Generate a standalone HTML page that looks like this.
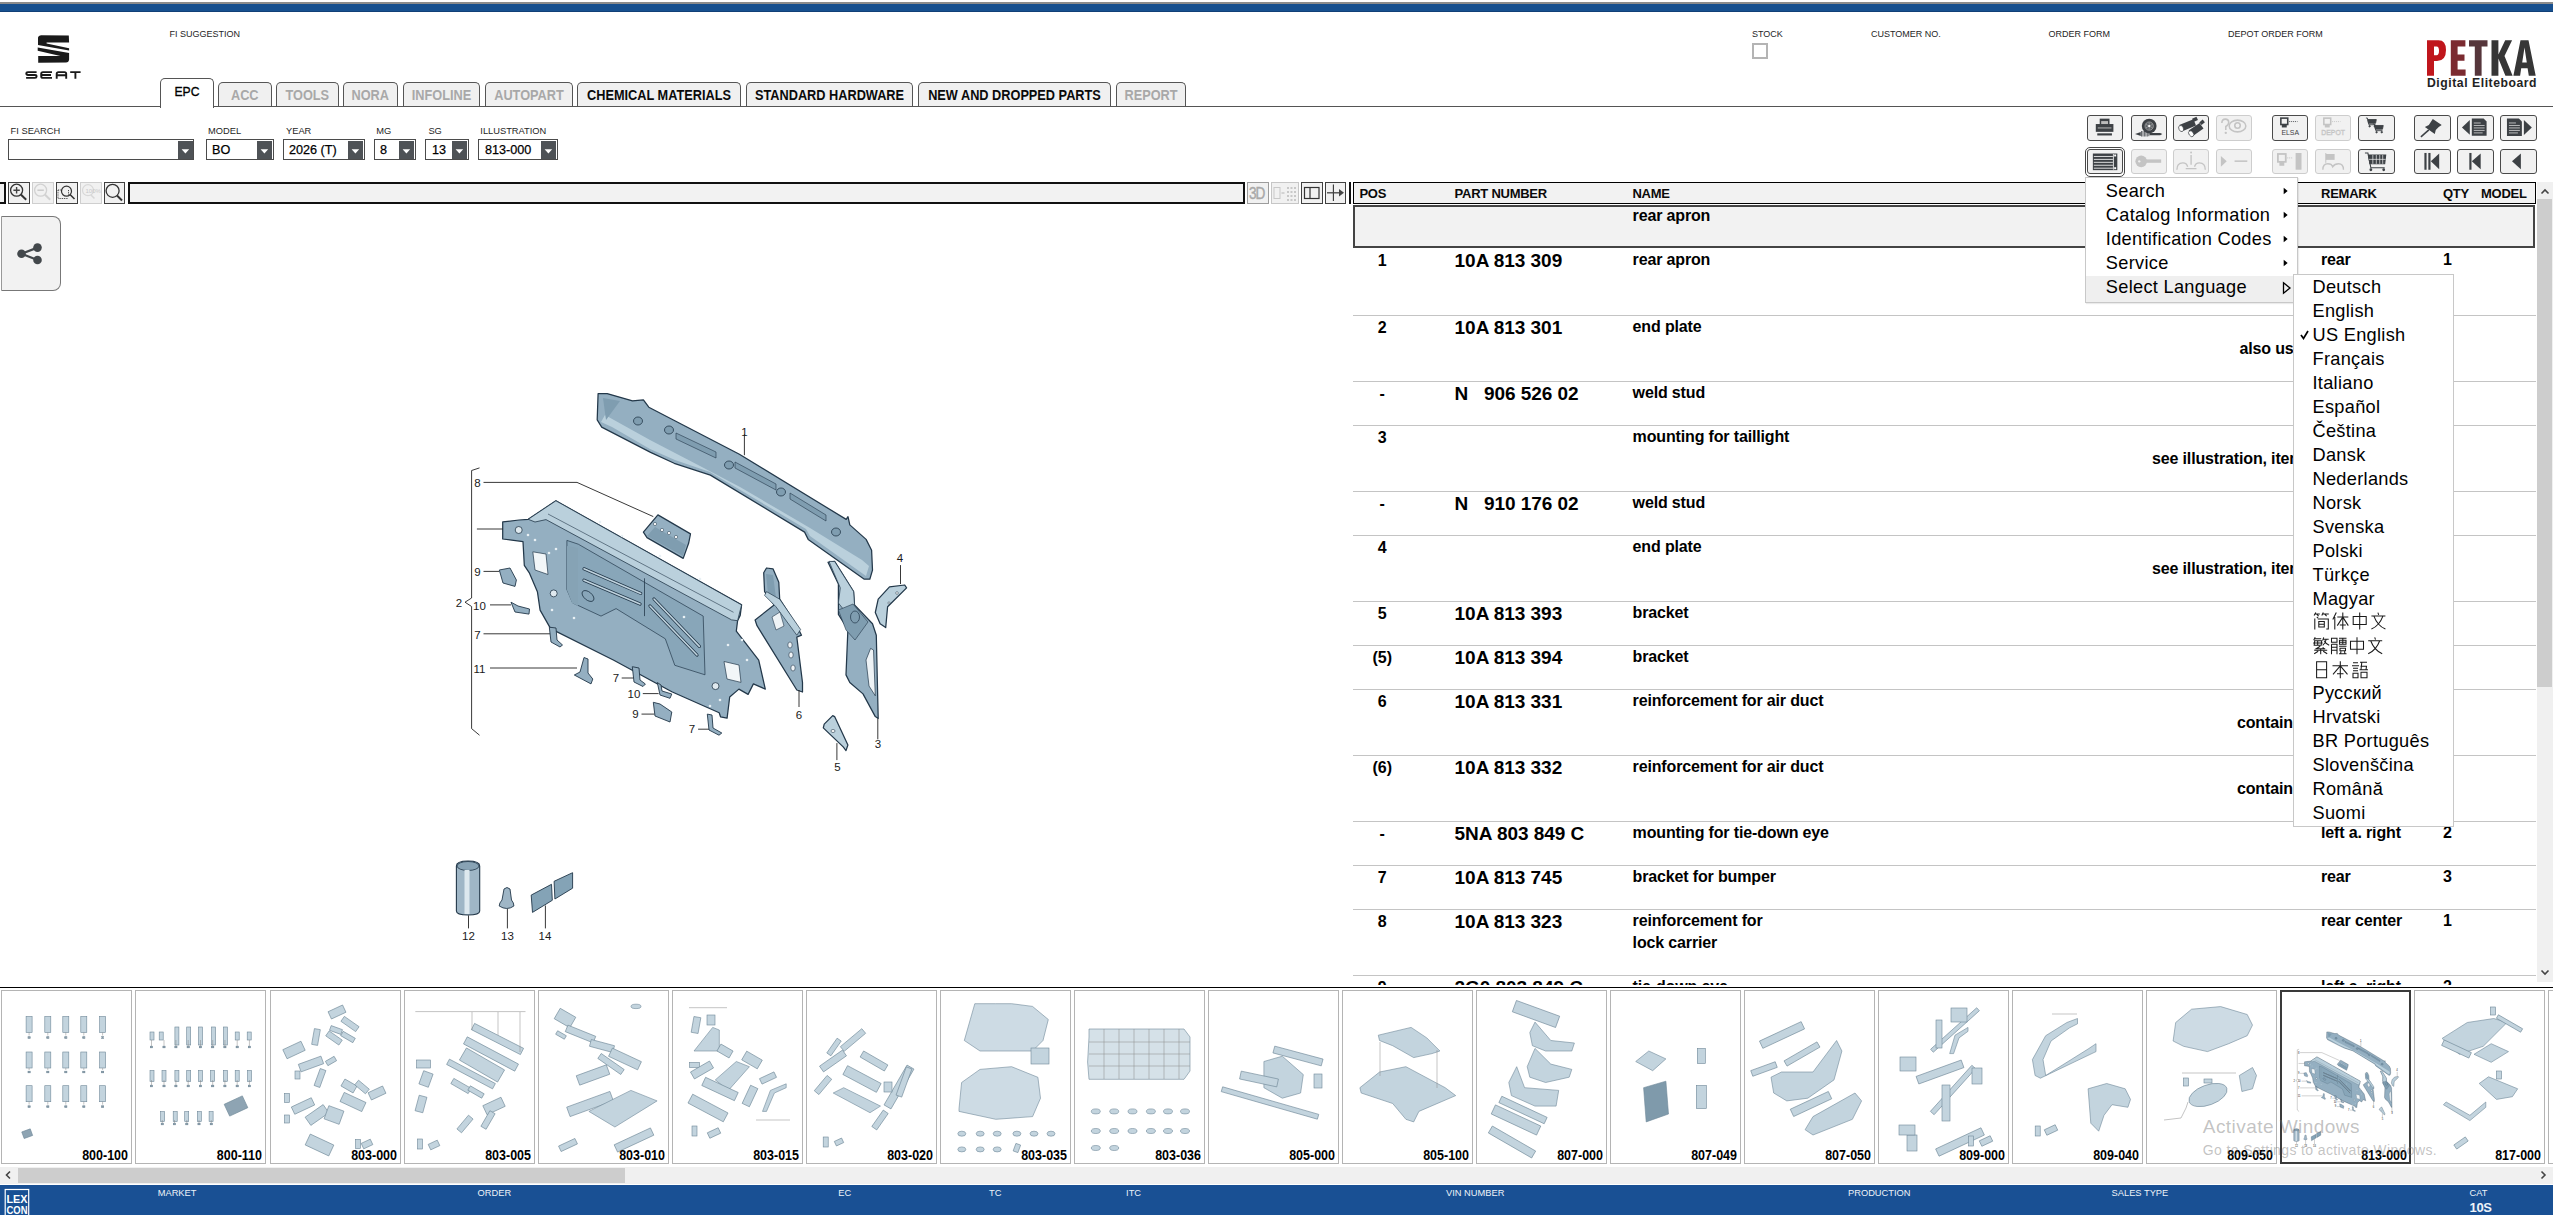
<!DOCTYPE html><html><head><meta charset="utf-8"><style>
*{margin:0;padding:0;box-sizing:border-box}
html,body{width:2553px;height:1215px;overflow:hidden;background:#fff;font-family:"Liberation Sans", sans-serif;}
.t{position:absolute;white-space:nowrap;line-height:normal;}
svg{position:absolute;overflow:visible}
</style></head><body><div style="position:absolute;left:0px;top:2px;width:2553px;height:2px;background:#8c8c8c"></div>
<div style="position:absolute;left:0px;top:4px;width:2553px;height:8px;background:#17508f"></div>
<div style="position:absolute;left:0px;top:11px;width:2553px;height:1px;background:#113f77"></div>
<svg style="left:0;top:0" width="100" height="90" viewBox="0 0 100 90">
<path d="M38,37.6 Q38.3,35.3 41,35.2 L68.8,35.5 L69.1,42.4 L46.6,42.4 L46.6,43.6 L69.1,48.3 L69.1,50.6 L38,45.1 Z" fill="#1a1a1a"/>
<path d="M37.7,47.4 L69.1,53 L69.1,59.4 Q68.8,62.4 66,62.5 L38.2,62.8 L38.2,55.9 L60.4,55.9 L37.7,50.8 Z" fill="#1a1a1a"/>
<g fill="none" stroke="#1a1a1a" stroke-width="1.9">
<path d="M36.6,72.1 L28,72.1 Q26.3,72.1 26.3,73.6 Q26.3,75 28,75 L35,75 Q36.6,75 36.6,76.5 Q36.6,77.9 35,77.9 L26.1,77.9"/>
<path d="M52,72.1 L43,72.1 Q41.2,72.1 41.2,73.8 L41.2,76.2 Q41.2,77.9 43,77.9 L52,77.9 M41.2,75 L51,75"/>
<path d="M56.7,78.8 L56.7,73.8 Q56.7,72.1 58.5,72.1 L64.5,72.1 Q66.2,72.1 66.2,73.8 L66.2,78.8 M56.7,75.2 L66.2,75.2"/>
<path d="M70.2,72.1 L80.6,72.1 M75.4,72.1 L75.4,78.8"/>
</g></svg>
<div class="t" style="left:169.5px;top:28.61px;font-size:9px;font-weight:400;color:#1e1e1e;letter-spacing:0px;">FI SUGGESTION</div>
<div class="t" style="left:1752px;top:28.61px;font-size:9px;font-weight:400;color:#1e1e1e;letter-spacing:0px;">STOCK</div>
<div class="t" style="left:1871px;top:28.61px;font-size:9px;font-weight:400;color:#1e1e1e;letter-spacing:0px;">CUSTOMER NO.</div>
<div class="t" style="left:2048.5px;top:28.61px;font-size:9px;font-weight:400;color:#1e1e1e;letter-spacing:0px;">ORDER FORM</div>
<div class="t" style="left:2228px;top:28.61px;font-size:9px;font-weight:400;color:#1e1e1e;letter-spacing:0px;">DEPOT ORDER FORM</div>
<div style="position:absolute;left:1752px;top:43px;width:16px;height:16px;border:2px solid #b4b4b4;background:#fff"></div>
<svg style="left:0;top:0" width="2553" height="100" viewBox="0 0 2553 100">
<path d="M2427,75.7 L2427,40.2 L2438.5,40.2 Q2446,40.2 2446,50 Q2446,61 2437,61 L2434,61 L2434,75.7 Z M2434,46.5 L2434,55.2 L2436.5,55.2 Q2439,55.2 2439,50.8 Q2439,46.5 2436.5,46.5 Z" fill="#c0161c" fill-rule="evenodd"/>
<path d="M2450.8,40.2 L2465.4,40.2 L2465.4,46.6 L2457.6,46.6 L2457.6,54.5 L2464.5,54.5 L2464.5,60.7 L2457.6,60.7 L2457.6,69.5 L2465.6,69.5 L2465.6,75.7 L2450.8,75.7 Z" fill="#7b2a30"/>
<path d="M2469,40.2 L2487.5,40.2 L2487.5,46.6 L2481.6,46.6 L2481.6,75.7 L2474.8,75.7 L2474.8,46.6 L2469,46.6 Z" fill="#56363b"/>
<path d="M2491.5,40.2 L2498.4,40.2 L2498.4,54.5 L2505.2,40.2 L2512.1,40.2 L2504.5,56 L2512.6,75.7 L2505.4,75.7 L2498.4,58.5 L2498.4,75.7 L2491.5,75.7 Z" fill="#363636"/>
<path d="M2513.4,75.7 L2520.5,40.2 L2528.5,40.2 L2535.7,75.7 L2528.8,75.7 L2527.6,68.2 L2521.2,68.2 L2520.1,75.7 Z M2522.2,62.4 L2526.8,62.4 L2524.5,47.5 Z" fill="#363636" fill-rule="evenodd"/>
</svg>
<div class="t" style="left:2427px;top:76.36px;font-size:12.2px;font-weight:700;color:#232323;letter-spacing:0.55px;">Digital Eliteboard</div>
<div style="position:absolute;left:0px;top:105.5px;width:2553px;height:1.5px;background:#555"></div>
<div style="position:absolute;left:160px;top:78px;width:54px;height:29.5px;background:#fff;border:1.5px solid #555;border-bottom:none;border-radius:5px 5px 0 0"></div>
<div class="t" style="left:160px;width:54px;text-align:center;top:84.0px;font-size:13.5px;font-weight:400;color:#000;-webkit-text-stroke:0.35px #000;transform:scaleX(0.9);transform-origin:50% 50%">EPC</div>
<div style="position:absolute;left:218px;top:82px;width:53.5px;height:24px;background:#f0f0f0;border:1.5px solid #555;border-bottom:none;border-radius:5px 5px 0 0"></div>
<div class="t" style="left:218px;width:53.5px;text-align:center;top:86.9px;font-size:14px;font-weight:700;color:#a8a8a8;transform:scaleX(0.91);transform-origin:50% 50%">ACC</div>
<div style="position:absolute;left:276px;top:82px;width:62.5px;height:24px;background:#f0f0f0;border:1.5px solid #555;border-bottom:none;border-radius:5px 5px 0 0"></div>
<div class="t" style="left:276px;width:62.5px;text-align:center;top:86.9px;font-size:14px;font-weight:700;color:#a8a8a8;transform:scaleX(0.91);transform-origin:50% 50%">TOOLS</div>
<div style="position:absolute;left:343px;top:82px;width:54.5px;height:24px;background:#f0f0f0;border:1.5px solid #555;border-bottom:none;border-radius:5px 5px 0 0"></div>
<div class="t" style="left:343px;width:54.5px;text-align:center;top:86.9px;font-size:14px;font-weight:700;color:#a8a8a8;transform:scaleX(0.91);transform-origin:50% 50%">NORA</div>
<div style="position:absolute;left:402.5px;top:82px;width:77.0px;height:24px;background:#f0f0f0;border:1.5px solid #555;border-bottom:none;border-radius:5px 5px 0 0"></div>
<div class="t" style="left:402.5px;width:77.0px;text-align:center;top:86.9px;font-size:14px;font-weight:700;color:#a8a8a8;transform:scaleX(0.91);transform-origin:50% 50%">INFOLINE</div>
<div style="position:absolute;left:484.5px;top:82px;width:88.0px;height:24px;background:#f0f0f0;border:1.5px solid #555;border-bottom:none;border-radius:5px 5px 0 0"></div>
<div class="t" style="left:484.5px;width:88.0px;text-align:center;top:86.9px;font-size:14px;font-weight:700;color:#a8a8a8;transform:scaleX(0.91);transform-origin:50% 50%">AUTOPART</div>
<div style="position:absolute;left:577px;top:82px;width:164px;height:24px;background:#f0f0f0;border:1.5px solid #555;border-bottom:none;border-radius:5px 5px 0 0"></div>
<div class="t" style="left:577px;width:164px;text-align:center;top:86.9px;font-size:14px;font-weight:700;color:#0a0a0a;transform:scaleX(0.91);transform-origin:50% 50%">CHEMICAL MATERIALS</div>
<div style="position:absolute;left:745.5px;top:82px;width:167.0px;height:24px;background:#f0f0f0;border:1.5px solid #555;border-bottom:none;border-radius:5px 5px 0 0"></div>
<div class="t" style="left:745.5px;width:167.0px;text-align:center;top:86.9px;font-size:14px;font-weight:700;color:#0a0a0a;transform:scaleX(0.91);transform-origin:50% 50%">STANDARD HARDWARE</div>
<div style="position:absolute;left:917.5px;top:82px;width:193.0px;height:24px;background:#f0f0f0;border:1.5px solid #555;border-bottom:none;border-radius:5px 5px 0 0"></div>
<div class="t" style="left:917.5px;width:193.0px;text-align:center;top:86.9px;font-size:14px;font-weight:700;color:#0a0a0a;transform:scaleX(0.91);transform-origin:50% 50%">NEW AND DROPPED PARTS</div>
<div style="position:absolute;left:1115.5px;top:82px;width:70.0px;height:24px;background:#f0f0f0;border:1.5px solid #555;border-bottom:none;border-radius:5px 5px 0 0"></div>
<div class="t" style="left:1115.5px;width:70.0px;text-align:center;top:86.9px;font-size:14px;font-weight:700;color:#a8a8a8;transform:scaleX(0.91);transform-origin:50% 50%">REPORT</div>
<div class="t" style="left:10.6px;top:126.23px;font-size:9.3px;font-weight:400;color:#1e1e1e;letter-spacing:0px;">FI SEARCH</div>
<div class="t" style="left:208px;top:126.23px;font-size:9.3px;font-weight:400;color:#1e1e1e;letter-spacing:0px;">MODEL</div>
<div class="t" style="left:286px;top:126.23px;font-size:9.3px;font-weight:400;color:#1e1e1e;letter-spacing:0px;">YEAR</div>
<div class="t" style="left:376.3px;top:126.23px;font-size:9.3px;font-weight:400;color:#1e1e1e;letter-spacing:0px;">MG</div>
<div class="t" style="left:428.4px;top:126.23px;font-size:9.3px;font-weight:400;color:#1e1e1e;letter-spacing:0px;">SG</div>
<div class="t" style="left:480.3px;top:126.23px;font-size:9.3px;font-weight:400;color:#1e1e1e;letter-spacing:0px;">ILLUSTRATION</div>
<div style="position:absolute;left:8.2px;top:139.2px;width:186.3px;height:21.3px;border:1.5px solid #4b4b4b;background:#fff"></div>
<div style="position:absolute;left:178.0px;top:141.2px;width:14.8px;height:17.6px;background:#4e5256"></div>
<svg style="left:178.0px;top:141.2px" width="15" height="18"><path d="M3.6,8.2 L11.2,8.2 L7.4,12.4 Z" fill="#fff"/></svg>
<div style="position:absolute;left:206.2px;top:139.2px;width:67.40000000000003px;height:21.3px;border:1.5px solid #4b4b4b;background:#fff"></div>
<div style="position:absolute;left:257.1px;top:141.2px;width:14.8px;height:17.6px;background:#4e5256"></div>
<svg style="left:257.1px;top:141.2px" width="15" height="18"><path d="M3.6,8.2 L11.2,8.2 L7.4,12.4 Z" fill="#fff"/></svg>
<div class="t" style="left:212.39999999999998px;top:141.55px;font-size:13.3px;font-weight:400;color:#000;letter-spacing:0px;-webkit-text-stroke:0.25px #000;transform:scaleX(0.95);transform-origin:0 50%">BO</div>
<div style="position:absolute;left:283.2px;top:139.2px;width:81.40000000000003px;height:21.3px;border:1.5px solid #4b4b4b;background:#fff"></div>
<div style="position:absolute;left:348.1px;top:141.2px;width:14.8px;height:17.6px;background:#4e5256"></div>
<svg style="left:348.1px;top:141.2px" width="15" height="18"><path d="M3.6,8.2 L11.2,8.2 L7.4,12.4 Z" fill="#fff"/></svg>
<div class="t" style="left:289.4px;top:141.55px;font-size:13.3px;font-weight:400;color:#000;letter-spacing:0px;-webkit-text-stroke:0.25px #000;transform:scaleX(0.95);transform-origin:0 50%">2026 (T)</div>
<div style="position:absolute;left:374.2px;top:139.2px;width:41.5px;height:21.3px;border:1.5px solid #4b4b4b;background:#fff"></div>
<div style="position:absolute;left:399.2px;top:141.2px;width:14.8px;height:17.6px;background:#4e5256"></div>
<svg style="left:399.2px;top:141.2px" width="15" height="18"><path d="M3.6,8.2 L11.2,8.2 L7.4,12.4 Z" fill="#fff"/></svg>
<div class="t" style="left:380.4px;top:141.55px;font-size:13.3px;font-weight:400;color:#000;letter-spacing:0px;-webkit-text-stroke:0.25px #000;transform:scaleX(0.95);transform-origin:0 50%">8</div>
<div style="position:absolute;left:425.3px;top:139.2px;width:43.30000000000001px;height:21.3px;border:1.5px solid #4b4b4b;background:#fff"></div>
<div style="position:absolute;left:452.1px;top:141.2px;width:14.8px;height:17.6px;background:#4e5256"></div>
<svg style="left:452.1px;top:141.2px" width="15" height="18"><path d="M3.6,8.2 L11.2,8.2 L7.4,12.4 Z" fill="#fff"/></svg>
<div class="t" style="left:431.5px;top:141.55px;font-size:13.3px;font-weight:400;color:#000;letter-spacing:0px;-webkit-text-stroke:0.25px #000;transform:scaleX(0.95);transform-origin:0 50%">13</div>
<div style="position:absolute;left:478.3px;top:139.2px;width:79.40000000000003px;height:21.3px;border:1.5px solid #4b4b4b;background:#fff"></div>
<div style="position:absolute;left:541.2px;top:141.2px;width:14.8px;height:17.6px;background:#4e5256"></div>
<svg style="left:541.2px;top:141.2px" width="15" height="18"><path d="M3.6,8.2 L11.2,8.2 L7.4,12.4 Z" fill="#fff"/></svg>
<div class="t" style="left:484.5px;top:141.55px;font-size:13.3px;font-weight:400;color:#000;letter-spacing:0px;-webkit-text-stroke:0.25px #000;transform:scaleX(0.95);transform-origin:0 50%">813-000</div>
<div style="position:absolute;left:2087.3px;top:115.3px;width:36.19999999999982px;height:25.299999999999997px;border:1.6px solid #4a4a4a;border-radius:3px;background:#f1f1f1"></div>
<svg style="left:2087.3px;top:115.3px" width="36.19999999999982" height="25.299999999999997" viewBox="0 0 37 25.4"><g fill="#3d4145"><rect x="13" y="3.5" width="10" height="8" /><rect x="9" y="9" width="18" height="8"/><rect x="10.5" y="18.5" width="15" height="2.2"/></g><rect x="14.5" y="6" width="7" height="3" fill="#bbb"/><rect x="11" y="12.5" width="14" height="1" fill="#bbb"/></svg>
<div style="position:absolute;left:2085.2px;top:147.2px;width:40.2px;height:29.4px;border:1.5px solid #474747;border-radius:5px"></div>
<div style="position:absolute;left:2087.3px;top:149.4px;width:36.19999999999982px;height:25.099999999999994px;border:1.6px solid #4a4a4a;border-radius:3px;background:#f1f1f1"></div>
<svg style="left:2087.3px;top:149.4px" width="36.19999999999982" height="25.099999999999994" viewBox="0 0 37 25.4"><rect x="6" y="4.5" width="25" height="17" fill="#3d4145"/><g stroke="#f1f1f1" stroke-width="0.9"><path d="M7,7.5 L26.5,7.5 M7,10.5 L26.5,10.5 M7,13.5 L26.5,13.5 M7,16.5 L26.5,16.5 M7,19.5 L26.5,19.5 M27,5 L27,21"/></g><rect x="27.8" y="5.5" width="2" height="2" fill="#fff"/><rect x="27.8" y="18.5" width="2" height="2" fill="#fff"/></svg>
<div style="position:absolute;left:2130.5px;top:115.3px;width:36.0px;height:25.299999999999997px;border:1.6px solid #4a4a4a;border-radius:3px;background:#f1f1f1"></div>
<svg style="left:2130.5px;top:115.3px" width="36.0" height="25.299999999999997" viewBox="0 0 37 25.4"><circle cx="18.7" cy="11.1" r="7.6" fill="#3d4145"/><circle cx="18.7" cy="11.1" r="4.3" fill="#5c6064" stroke="#bdbdbd" stroke-width="0.6"/><g stroke="#c8c8c8" stroke-width="0.5"><path d="M18.7,7.5 L18.7,14.7 M15.3,9.3 L22.1,12.9 M15.3,12.9 L22.1,9.3"/></g><circle cx="18.7" cy="11.1" r="1.1" fill="#fff"/><path d="M4.2,19.3 L10,17.2 L10,21.4 Z" fill="#3d4145"/><g stroke="#3d4145" stroke-width="0.8"><path d="M10.8,16.2 L10.8,21.8 M12.3,16.2 L12.3,21.8 M13.8,16.2 L13.8,21.8 M15.3,16.2 L15.3,21.8 M16.8,16.2 L16.8,21.8 M18.3,16.5 L18.3,21.5"/></g><path d="M19,18.1 L30,18.1 L32.2,19.3 L30,20.5 L19,20.5 Z" fill="#3d4145"/></svg>
<div style="position:absolute;left:2130.5px;top:149.4px;width:36.0px;height:25.099999999999994px;border:1.6px solid #cdcdcd;border-radius:3px;background:#f1f1f1"></div>
<svg style="left:2130.5px;top:149.4px" width="36.0" height="25.099999999999994" viewBox="0 0 37 25.4"><circle cx="10.5" cy="12.5" r="6" fill="#c4c4c4"/><rect x="14" y="10.5" width="17" height="3.5" fill="#c4c4c4"/><circle cx="8.5" cy="12.5" r="1.2" fill="#eee"/></svg>
<div style="position:absolute;left:2173.3px;top:115.3px;width:36.19999999999982px;height:25.299999999999997px;border:1.6px solid #4a4a4a;border-radius:3px;background:#f1f1f1"></div>
<svg style="left:2173.3px;top:115.3px" width="36.19999999999982" height="25.299999999999997" viewBox="0 0 37 25.4"><g fill="#3d4145"><rect x="7.1" y="6.8" width="15.7" height="7" transform="rotate(-22.5 15 10.3)"/><rect x="16.8" y="11.2" width="13.6" height="7" transform="rotate(-35 23.6 14.7)"/><rect x="20" y="2.5" width="5" height="3.6" transform="rotate(-25 22.5 4.3)"/><rect x="27.5" y="5.5" width="4.5" height="3.6" transform="rotate(-40 29.7 7.3)"/></g><ellipse cx="8.3" cy="13.6" rx="2.3" ry="3.3" transform="rotate(-25 8.3 13.6)" fill="#fff" stroke="#3d4145" stroke-width="0.7"/><ellipse cx="18.6" cy="18.9" rx="2.3" ry="3.3" transform="rotate(-35 18.6 18.9)" fill="#fff" stroke="#3d4145" stroke-width="0.7"/></svg>
<div style="position:absolute;left:2173.3px;top:149.4px;width:36.19999999999982px;height:25.099999999999994px;border:1.6px solid #cdcdcd;border-radius:3px;background:#f1f1f1"></div>
<svg style="left:2173.3px;top:149.4px" width="36.19999999999982" height="25.099999999999994" viewBox="0 0 37 25.4"><g fill="none" stroke="#c4c4c4" stroke-width="1.4"><path d="M4,21 Q4,14 10,14 Q14,14 15,18 M22,18 Q23,14 27,14 Q33,14 33,21 M13,20 L24,20 M18.5,6 L18.5,16"/></g><circle cx="18.5" cy="3.5" r="1" fill="#c4c4c4"/></svg>
<div style="position:absolute;left:2216.3px;top:115.3px;width:36.19999999999982px;height:25.299999999999997px;border:1.6px solid #cdcdcd;border-radius:3px;background:#f1f1f1"></div>
<svg style="left:2216.3px;top:115.3px" width="36.19999999999982" height="25.299999999999997" viewBox="0 0 37 25.4"><g fill="none" stroke="#c4c4c4" stroke-width="1.6"><path d="M6,8 Q6,4 9.5,4 Q13,4 13,7.5 Q13,10 10,11.5 L10,15"/><ellipse cx="22" cy="11" rx="8.5" ry="6"/><circle cx="22" cy="10.5" r="2.8"/></g><circle cx="10" cy="18" r="1.2" fill="#c4c4c4"/></svg>
<div style="position:absolute;left:2216.3px;top:149.4px;width:36.19999999999982px;height:25.099999999999994px;border:1.6px solid #cdcdcd;border-radius:3px;background:#f1f1f1"></div>
<svg style="left:2216.3px;top:149.4px" width="36.19999999999982" height="25.099999999999994" viewBox="0 0 37 25.4"><path d="M5,7 L11,12.5 L5,18 Z" fill="#c4c4c4"/><rect x="19" y="11.5" width="13" height="1.6" fill="#c4c4c4"/></svg>
<div style="position:absolute;left:2272.1px;top:115.3px;width:36.40000000000009px;height:25.299999999999997px;border:1.6px solid #4a4a4a;border-radius:3px;background:#f1f1f1"></div>
<svg style="left:2272.1px;top:115.3px" width="36.40000000000009" height="25.299999999999997" viewBox="0 0 37 25.4"><rect x="9" y="3" width="7" height="6.5" fill="none" stroke="#3d4145" stroke-width="1.6"/><rect x="10" y="10" width="5" height="2.5" fill="#3d4145"/><path d="M17.5,6.5 L26,6.5" stroke="#3d4145" stroke-width="0.9" stroke-dasharray="1,1"/><text x="18.5" y="20.5" font-size="7" text-anchor="middle" fill="#3d4145" font-family="Liberation Sans">ELSA</text></svg>
<div style="position:absolute;left:2272.1px;top:149.4px;width:36.40000000000009px;height:25.099999999999994px;border:1.6px solid #cdcdcd;border-radius:3px;background:#f1f1f1"></div>
<svg style="left:2272.1px;top:149.4px" width="36.40000000000009" height="25.099999999999994" viewBox="0 0 37 25.4"><rect x="6" y="5" width="8" height="8" fill="none" stroke="#c4c4c4" stroke-width="1.8"/><rect x="7.5" y="13" width="5" height="4" fill="#c4c4c4"/><path d="M15.5,9 L21,9" stroke="#c4c4c4" stroke-width="1" stroke-dasharray="1,1"/><rect x="24" y="4" width="6" height="17" fill="#c4c4c4"/></svg>
<div style="position:absolute;left:2315.2px;top:115.3px;width:36.30000000000018px;height:25.299999999999997px;border:1.6px solid #cdcdcd;border-radius:3px;background:#f1f1f1"></div>
<svg style="left:2315.2px;top:115.3px" width="36.30000000000018" height="25.299999999999997" viewBox="0 0 37 25.4"><rect x="9" y="3" width="7" height="6.5" fill="none" stroke="#c4c4c4" stroke-width="1.6"/><rect x="10" y="10" width="5" height="2.5" fill="#c4c4c4"/><path d="M17.5,6.5 L26,6.5" stroke="#c4c4c4" stroke-width="0.9" stroke-dasharray="1,1"/><text x="18.5" y="20.5" font-size="7" text-anchor="middle" fill="none" stroke="#c4c4c4" stroke-width="0.5" font-family="Liberation Sans">DEPOT</text></svg>
<div style="position:absolute;left:2315.2px;top:149.4px;width:36.30000000000018px;height:25.099999999999994px;border:1.6px solid #cdcdcd;border-radius:3px;background:#f1f1f1"></div>
<svg style="left:2315.2px;top:149.4px" width="36.30000000000018" height="25.099999999999994" viewBox="0 0 37 25.4"><rect x="11" y="5" width="9" height="6" fill="#c4c4c4"/><path d="M11,4 L11,14" stroke="#c4c4c4" stroke-width="1"/><g fill="none" stroke="#c4c4c4" stroke-width="1.4"><path d="M8,21 Q8,15 13,15 Q17,15 18,18 Q20,15 24,15 Q29,15 29,21"/></g></svg>
<div style="position:absolute;left:2358.2px;top:115.3px;width:36.600000000000364px;height:25.299999999999997px;border:1.6px solid #4a4a4a;border-radius:3px;background:#f1f1f1"></div>
<svg style="left:2358.2px;top:115.3px" width="36.600000000000364" height="25.299999999999997" viewBox="0 0 37 25.4"><g transform="translate(8 3) scale(0.75)" fill="none" stroke="#3d4145" stroke-width="1.2"><path d="M0,0 L2,0 L4,9 L13,9"/><path d="M2.5,2 L14,2 L13,7 L3.5,7 Z" fill="#3d4145"/><circle cx="5" cy="11" r="1" fill="#3d4145"/><circle cx="12" cy="11" r="1" fill="#3d4145"/></g><g transform="translate(15 9) scale(0.75)" fill="none" stroke="#3d4145" stroke-width="1.2"><path d="M0,0 L2,0 L4,9 L13,9"/><path d="M2.5,2 L14,2 L13,7 L3.5,7 Z" fill="#3d4145"/><circle cx="5" cy="11" r="1" fill="#3d4145"/><circle cx="12" cy="11" r="1" fill="#3d4145"/></g></svg>
<div style="position:absolute;left:2358.2px;top:149.4px;width:36.600000000000364px;height:25.099999999999994px;border:1.6px solid #4a4a4a;border-radius:3px;background:#f1f1f1"></div>
<svg style="left:2358.2px;top:149.4px" width="36.600000000000364" height="25.099999999999994" viewBox="0 0 37 25.4"><g fill="none" stroke="#3d4145" stroke-width="1.1"><path d="M7,4 L10,4 L13,19 L27,19"/><path d="M10.5,6 L28,6 L27,15 L12,15 Z" fill="#3d4145"/></g><g stroke="#f1f1f1" stroke-width="0.7"><path d="M15,6 L15,15 M18.5,6 L18.5,15 M22,6 L22,15 M25,6 L25,15 M11,10.5 L28,10.5"/></g><circle cx="13" cy="21" r="1.4" fill="#3d4145"/><circle cx="26" cy="21" r="1.4" fill="#3d4145"/></svg>
<div style="position:absolute;left:2414.2px;top:115.3px;width:36.600000000000364px;height:25.299999999999997px;border:1.6px solid #4a4a4a;border-radius:3px;background:#f1f1f1"></div>
<svg style="left:2414.2px;top:115.3px" width="36.600000000000364" height="25.299999999999997" viewBox="0 0 37 25.4"><path d="M19,4 L28,10 L25,12 L22,15 L21,19 L11,12 L15,10 L17,7 Z" fill="#3d4145"/><path d="M15,15 L7,22" stroke="#3d4145" stroke-width="1.6"/></svg>
<div style="position:absolute;left:2414.2px;top:149.4px;width:36.600000000000364px;height:25.099999999999994px;border:1.6px solid #4a4a4a;border-radius:3px;background:#f1f1f1"></div>
<svg style="left:2414.2px;top:149.4px" width="36.600000000000364" height="25.099999999999994" viewBox="0 0 37 25.4"><rect x="10.5" y="4" width="2.2" height="17" fill="#3d4145"/><rect x="14.5" y="4" width="2.2" height="17" fill="#3d4145"/><path d="M17,12.5 L25.5,4.5 L25.5,20.5 Z" fill="#3d4145"/></svg>
<div style="position:absolute;left:2457.1px;top:115.3px;width:36.5px;height:25.299999999999997px;border:1.6px solid #4a4a4a;border-radius:3px;background:#f1f1f1"></div>
<svg style="left:2457.1px;top:115.3px" width="36.5" height="25.299999999999997" viewBox="0 0 37 25.4"><path d="M5,12.5 L13,5 L13,20 Z" fill="#3d4145"/><path d="M15,3.5 L27,3.5 L30,6.5 L30,21 L15,21 Z" fill="#3d4145"/><g stroke="#f1f1f1" stroke-width="0.7"><path d="M17,8 L24,8 M17,10.5 L28,10.5 M17,13 L28,13 M17,15.5 L28,15.5 M17,18 L26,18"/></g></svg>
<div style="position:absolute;left:2457.1px;top:149.4px;width:36.5px;height:25.099999999999994px;border:1.6px solid #4a4a4a;border-radius:3px;background:#f1f1f1"></div>
<svg style="left:2457.1px;top:149.4px" width="36.5" height="25.099999999999994" viewBox="0 0 37 25.4"><rect x="12.5" y="4" width="2.2" height="17" fill="#3d4145"/><path d="M15,12.5 L24,4.5 L24,20.5 Z" fill="#3d4145"/></svg>
<div style="position:absolute;left:2500.2px;top:115.3px;width:36.80000000000018px;height:25.299999999999997px;border:1.6px solid #4a4a4a;border-radius:3px;background:#f1f1f1"></div>
<svg style="left:2500.2px;top:115.3px" width="36.80000000000018" height="25.299999999999997" viewBox="0 0 37 25.4"><path d="M32,12.5 L24,5 L24,20 Z" fill="#3d4145"/><path d="M7,3.5 L19,3.5 L22,6.5 L22,21 L7,21 Z" fill="#3d4145"/><g stroke="#f1f1f1" stroke-width="0.7"><path d="M9,8 L16,8 M9,10.5 L20,10.5 M9,13 L20,13 M9,15.5 L20,15.5 M9,18 L18,18"/></g></svg>
<div style="position:absolute;left:2500.2px;top:149.4px;width:36.80000000000018px;height:25.099999999999994px;border:1.6px solid #4a4a4a;border-radius:3px;background:#f1f1f1"></div>
<svg style="left:2500.2px;top:149.4px" width="36.80000000000018" height="25.099999999999994" viewBox="0 0 37 25.4"><path d="M12,12.5 L21,4.5 L21,20.5 Z" fill="#3d4145"/></svg>
<div style="position:absolute;left:-4px;top:182.1px;width:10px;height:21.6px;border:2.5px solid #111;background:#f2f2f2"></div>
<div style="position:absolute;left:8.2px;top:182.1px;width:21.7px;height:21.6px;border:1.5px solid #404040;background:#f1f1f1"></div>
<svg style="left:8.2px;top:182.1px" width="22" height="22" viewBox="0 0 22 22"><circle cx="8.6" cy="8.2" r="6" fill="none" stroke="#333" stroke-width="1.3"/><path d="M5.4,8.2 L11.8,8.2 M8.6,5 L8.6,11.4" stroke="#444" stroke-width="1.4"/><path d="M12.8,12.5 L18.2,17.8" stroke="#333" stroke-width="2"/></svg>
<div style="position:absolute;left:32px;top:182.1px;width:21.700000000000003px;height:21.6px;border:1.5px solid #cfcfcf;background:#f1f1f1"></div>
<svg style="left:32px;top:182.1px" width="22" height="22" viewBox="0 0 22 22"><circle cx="8.6" cy="8.2" r="6" fill="none" stroke="#d2d2d2" stroke-width="1.3"/><path d="M5.4,8.2 L11.8,8.2" stroke="#c8c8c8" stroke-width="1.4"/><path d="M12.8,12.5 L18.2,17.8" stroke="#d2d2d2" stroke-width="2"/></svg>
<div style="position:absolute;left:56.2px;top:182.1px;width:21.39999999999999px;height:21.6px;border:1.5px solid #404040;background:#f1f1f1"></div>
<svg style="left:56.2px;top:182.1px" width="22" height="22" viewBox="0 0 22 22"><circle cx="10.5" cy="9.2" r="5" fill="none" stroke="#333" stroke-width="1.2"/><path d="M12.5,8 L12.5,13.5 M2,8 L2,16.5 L12,16.5 M2,8 L6,8" stroke="#333" stroke-width="0.9" stroke-dasharray="1,0.8" fill="none"/><path d="M14,12.5 L18.5,17" stroke="#333" stroke-width="1.6"/></svg>
<div style="position:absolute;left:80.2px;top:182.1px;width:21.5px;height:21.6px;border:1.5px solid #cfcfcf;background:#f1f1f1"></div>
<svg style="left:80.2px;top:182.1px" width="22" height="22" viewBox="0 0 22 22"><circle cx="8" cy="8.2" r="5.5" fill="none" stroke="#d8d8d8" stroke-width="1.2"/><text x="5.5" y="10.5" font-size="6" fill="#c8c8c8" font-family="Liberation Sans">100%</text><path d="M11,13 L14.5,16.5" stroke="#d8d8d8" stroke-width="1.5"/></svg>
<div style="position:absolute;left:104.2px;top:182.1px;width:21.299999999999997px;height:21.6px;border:1.5px solid #404040;background:#f1f1f1"></div>
<svg style="left:104.2px;top:182.1px" width="22" height="22" viewBox="0 0 22 22"><circle cx="8.6" cy="8.8" r="6.5" fill="none" stroke="#333" stroke-width="1.3"/><path d="M13,13.5 L18,18.5" stroke="#333" stroke-width="2"/></svg>
<div style="position:absolute;left:128.3px;top:182.1px;width:1116.5px;height:21.6px;border:2.5px solid #111;background:#f2f2f2"></div>
<div style="position:absolute;left:1247.3px;top:182.1px;width:21.40000000000009px;height:21.6px;border:1.5px solid #9c9c9c;background:#f1f1f1"></div>
<svg style="left:1247.3px;top:182.1px" width="21.40000000000009" height="22" viewBox="0 0 21.40000000000009 22"><text x="2.5" y="17" font-size="16" fill="#a8a8a8" stroke="#a8a8a8" stroke-width="0.4" font-family="Liberation Sans" transform="scale(0.85 1)" textLength="19">3D</text></svg>
<div style="position:absolute;left:1271.2px;top:182.1px;width:27.399999999999864px;height:21.6px;border:1.5px solid #c6c6c6;background:#f1f1f1"></div>
<svg style="left:1271.2px;top:182.1px" width="27.399999999999864" height="22" viewBox="0 0 27.399999999999864 22"><rect x="3" y="5.5" width="6" height="11" fill="none" stroke="#c8c8c8" stroke-width="1"/><path d="M10.5,11 L13.5,11" stroke="#c8c8c8" stroke-width="1.5"/><g fill="#c8c8c8"><rect x="16" y="5" width="2" height="2"/><rect x="19.5" y="5" width="2" height="2"/><rect x="23" y="5" width="2" height="2"/><rect x="16" y="9" width="2" height="2"/><rect x="19.5" y="9" width="2" height="2"/><rect x="23" y="9" width="2" height="2"/><rect x="16" y="13" width="2" height="2"/><rect x="19.5" y="13" width="2" height="2"/><rect x="23" y="13" width="2" height="2"/><rect x="16" y="17" width="2" height="2"/><rect x="19.5" y="17" width="2" height="2"/><rect x="23" y="17" width="2" height="2"/></g></svg>
<div style="position:absolute;left:1301.2px;top:182.1px;width:21.5px;height:21.6px;border:1.5px solid #404040;background:#f1f1f1"></div>
<svg style="left:1301.2px;top:182.1px" width="21.5" height="22" viewBox="0 0 21.5 22"><rect x="3.5" y="5.5" width="14.5" height="11" fill="none" stroke="#333" stroke-width="1.2"/><path d="M9,5.5 L9,16.5" stroke="#333" stroke-width="1.2"/></svg>
<div style="position:absolute;left:1325.1px;top:182.1px;width:21.40000000000009px;height:21.6px;border:1.5px solid #404040;background:#f1f1f1"></div>
<svg style="left:1325.1px;top:182.1px" width="21.40000000000009" height="22" viewBox="0 0 21.40000000000009 22"><path d="M8.4,2.5 L8.4,19" stroke="#333" stroke-width="1.1"/><path d="M2,10.8 L16,10.8" stroke="#444" stroke-width="1.3"/><path d="M14,7 L19,10.8 L14,14.5 Z" fill="#444"/></svg>
<div style="position:absolute;left:1348.7px;top:182.1px;width:2px;height:21.8px;background:#111"></div>
<div style="position:absolute;left:1.2px;top:216.2px;width:59.6px;height:75.2px;border:1.2px solid #777;border-left:1.2px solid #999;border-radius:0 8px 8px 0;background:#f2f2f2"></div>
<svg style="left:0;top:0" width="80" height="300"><g fill="#43484c"><circle cx="21.5" cy="253.8" r="4.3"/><circle cx="37.5" cy="247.6" r="4.3"/><circle cx="37.5" cy="260" r="4.3"/></g><path d="M21.5,253.8 L37.5,247.6 M21.5,253.8 L37.5,260" stroke="#43484c" stroke-width="2.2"/></svg>
<div style="position:absolute;left:1353.2px;top:182.1px;width:1182.6000000000001px;height:21.6px;border:1.5px solid #000;border-bottom:1px solid #000;background:#f2f2f2"></div>
<div class="t" style="left:1359.4px;top:185.93px;font-size:13px;font-weight:700;color:#0a0a0a;letter-spacing:-0.25px;">POS</div>
<div class="t" style="left:1454.6px;top:185.93px;font-size:13px;font-weight:700;color:#0a0a0a;letter-spacing:-0.25px;">PART NUMBER</div>
<div class="t" style="left:1632.4px;top:185.93px;font-size:13px;font-weight:700;color:#0a0a0a;letter-spacing:-0.25px;">NAME</div>
<div class="t" style="left:2321px;top:185.93px;font-size:13px;font-weight:700;color:#0a0a0a;letter-spacing:-0.25px;">REMARK</div>
<div class="t" style="left:2443px;top:185.93px;font-size:13px;font-weight:700;color:#0a0a0a;letter-spacing:-0.25px;">QTY</div>
<div class="t" style="left:2481px;top:185.93px;font-size:13px;font-weight:700;color:#0a0a0a;letter-spacing:-0.25px;">MODEL</div>
<div style="position:absolute;left:1353px;top:204px;width:1183px;height:780.5px;overflow:hidden">
<div style="position:absolute;left:0.2px;top:1.1px;width:1182px;height:43.4px;border:2px solid #444;background:#f2f2f2"></div>
<div class="t" style="left:279.5999999999999px;top:2.66px;font-size:16px;font-weight:700;color:#000;letter-spacing:-0.15px">rear apron</div>
<div style="position:absolute;left:0;top:110.7px;width:1183px;height:1px;background:#c4c4c4"></div>
<div class="t" style="left:29.200000000000045px;top:48.06px;font-size:16px;font-weight:700;color:#000;letter-spacing:0px"><span style="display:inline-block;transform:translateX(-50%)">1</span></div>
<div class="t" style="left:101.59999999999991px;top:46.20px;font-size:19px;font-weight:700;color:#000;letter-spacing:-0.05px">10A 813 309</div>
<div class="t" style="left:279.5999999999999px;top:47.06px;font-size:16px;font-weight:700;color:#000;letter-spacing:-0.15px">rear apron</div>
<div class="t" style="left:968px;top:47.06px;font-size:16px;font-weight:700;color:#000;letter-spacing:-0.15px">rear</div>
<div class="t" style="left:1090px;top:47.06px;font-size:16px;font-weight:700;color:#000;letter-spacing:0px">1</div>
<div style="position:absolute;left:0;top:176.5px;width:1183px;height:1px;background:#c4c4c4"></div>
<div class="t" style="left:29.200000000000045px;top:114.76px;font-size:16px;font-weight:700;color:#000;letter-spacing:0px"><span style="display:inline-block;transform:translateX(-50%)">2</span></div>
<div class="t" style="left:101.59999999999991px;top:112.90px;font-size:19px;font-weight:700;color:#000;letter-spacing:-0.05px">10A 813 301</div>
<div class="t" style="left:279.5999999999999px;top:113.76px;font-size:16px;font-weight:700;color:#000;letter-spacing:-0.15px">end plate</div>
<div class="t" style="left:886.5px;top:135.76px;font-size:16px;font-weight:700;color:#000;letter-spacing:-0.15px">also used for</div>
<div style="position:absolute;left:0;top:221.0px;width:1183px;height:1px;background:#c4c4c4"></div>
<div class="t" style="left:29.200000000000045px;top:180.56px;font-size:16px;font-weight:700;color:#000;letter-spacing:0px"><span style="display:inline-block;transform:translateX(-50%)">-</span></div>
<div class="t" style="left:101.59999999999991px;top:178.70px;font-size:19px;font-weight:700;color:#000;letter-spacing:-0.05px">N&nbsp;&nbsp;&nbsp;906 526 02</div>
<div class="t" style="left:279.5999999999999px;top:179.56px;font-size:16px;font-weight:700;color:#000;letter-spacing:-0.15px">weld stud</div>
<div style="position:absolute;left:0;top:286.8px;width:1183px;height:1px;background:#c4c4c4"></div>
<div class="t" style="left:29.200000000000045px;top:225.06px;font-size:16px;font-weight:700;color:#000;letter-spacing:0px"><span style="display:inline-block;transform:translateX(-50%)">3</span></div>
<div class="t" style="left:279.5999999999999px;top:224.06px;font-size:16px;font-weight:700;color:#000;letter-spacing:-0.15px">mounting for taillight</div>
<div class="t" style="left:799px;top:246.06px;font-size:16px;font-weight:700;color:#000;letter-spacing:-0.15px">see illustration, item</div>
<div style="position:absolute;left:0;top:330.5px;width:1183px;height:1px;background:#c4c4c4"></div>
<div class="t" style="left:29.200000000000045px;top:290.86px;font-size:16px;font-weight:700;color:#000;letter-spacing:0px"><span style="display:inline-block;transform:translateX(-50%)">-</span></div>
<div class="t" style="left:101.59999999999991px;top:289.00px;font-size:19px;font-weight:700;color:#000;letter-spacing:-0.05px">N&nbsp;&nbsp;&nbsp;910 176 02</div>
<div class="t" style="left:279.5999999999999px;top:289.86px;font-size:16px;font-weight:700;color:#000;letter-spacing:-0.15px">weld stud</div>
<div class="t" style="left:1090px;top:289.86px;font-size:16px;font-weight:700;color:#000;letter-spacing:0px">2</div>
<div style="position:absolute;left:0;top:396.8px;width:1183px;height:1px;background:#c4c4c4"></div>
<div class="t" style="left:29.200000000000045px;top:334.56px;font-size:16px;font-weight:700;color:#000;letter-spacing:0px"><span style="display:inline-block;transform:translateX(-50%)">4</span></div>
<div class="t" style="left:279.5999999999999px;top:333.56px;font-size:16px;font-weight:700;color:#000;letter-spacing:-0.15px">end plate</div>
<div class="t" style="left:799px;top:355.56px;font-size:16px;font-weight:700;color:#000;letter-spacing:-0.15px">see illustration, item</div>
<div style="position:absolute;left:0;top:440.6px;width:1183px;height:1px;background:#c4c4c4"></div>
<div class="t" style="left:29.200000000000045px;top:400.86px;font-size:16px;font-weight:700;color:#000;letter-spacing:0px"><span style="display:inline-block;transform:translateX(-50%)">5</span></div>
<div class="t" style="left:101.59999999999991px;top:399.00px;font-size:19px;font-weight:700;color:#000;letter-spacing:-0.05px">10A 813 393</div>
<div class="t" style="left:279.5999999999999px;top:399.86px;font-size:16px;font-weight:700;color:#000;letter-spacing:-0.15px">bracket</div>
<div style="position:absolute;left:0;top:484.5px;width:1183px;height:1px;background:#c4c4c4"></div>
<div class="t" style="left:29.200000000000045px;top:444.66px;font-size:16px;font-weight:700;color:#000;letter-spacing:0px"><span style="display:inline-block;transform:translateX(-50%)">(5)</span></div>
<div class="t" style="left:101.59999999999991px;top:442.80px;font-size:19px;font-weight:700;color:#000;letter-spacing:-0.05px">10A 813 394</div>
<div class="t" style="left:279.5999999999999px;top:443.66px;font-size:16px;font-weight:700;color:#000;letter-spacing:-0.15px">bracket</div>
<div style="position:absolute;left:0;top:550.9px;width:1183px;height:1px;background:#c4c4c4"></div>
<div class="t" style="left:29.200000000000045px;top:488.56px;font-size:16px;font-weight:700;color:#000;letter-spacing:0px"><span style="display:inline-block;transform:translateX(-50%)">6</span></div>
<div class="t" style="left:101.59999999999991px;top:486.70px;font-size:19px;font-weight:700;color:#000;letter-spacing:-0.05px">10A 813 331</div>
<div class="t" style="left:279.5999999999999px;top:487.56px;font-size:16px;font-weight:700;color:#000;letter-spacing:-0.15px">reinforcement for air duct</div>
<div class="t" style="left:884px;top:509.56px;font-size:16px;font-weight:700;color:#000;letter-spacing:-0.15px">contained</div>
<div style="position:absolute;left:0;top:616.7px;width:1183px;height:1px;background:#c4c4c4"></div>
<div class="t" style="left:29.200000000000045px;top:554.96px;font-size:16px;font-weight:700;color:#000;letter-spacing:0px"><span style="display:inline-block;transform:translateX(-50%)">(6)</span></div>
<div class="t" style="left:101.59999999999991px;top:553.10px;font-size:19px;font-weight:700;color:#000;letter-spacing:-0.05px">10A 813 332</div>
<div class="t" style="left:279.5999999999999px;top:553.96px;font-size:16px;font-weight:700;color:#000;letter-spacing:-0.15px">reinforcement for air duct</div>
<div class="t" style="left:884px;top:575.96px;font-size:16px;font-weight:700;color:#000;letter-spacing:-0.15px">contained</div>
<div style="position:absolute;left:0;top:660.6px;width:1183px;height:1px;background:#c4c4c4"></div>
<div class="t" style="left:29.200000000000045px;top:620.76px;font-size:16px;font-weight:700;color:#000;letter-spacing:0px"><span style="display:inline-block;transform:translateX(-50%)">-</span></div>
<div class="t" style="left:101.59999999999991px;top:618.90px;font-size:19px;font-weight:700;color:#000;letter-spacing:-0.05px">5NA 803 849 C</div>
<div class="t" style="left:279.5999999999999px;top:619.76px;font-size:16px;font-weight:700;color:#000;letter-spacing:-0.15px">mounting for tie-down eye</div>
<div class="t" style="left:968px;top:619.76px;font-size:16px;font-weight:700;color:#000;letter-spacing:-0.15px">left a. right</div>
<div class="t" style="left:1090px;top:619.76px;font-size:16px;font-weight:700;color:#000;letter-spacing:0px">2</div>
<div style="position:absolute;left:0;top:704.5px;width:1183px;height:1px;background:#c4c4c4"></div>
<div class="t" style="left:29.200000000000045px;top:664.66px;font-size:16px;font-weight:700;color:#000;letter-spacing:0px"><span style="display:inline-block;transform:translateX(-50%)">7</span></div>
<div class="t" style="left:101.59999999999991px;top:662.80px;font-size:19px;font-weight:700;color:#000;letter-spacing:-0.05px">10A 813 745</div>
<div class="t" style="left:279.5999999999999px;top:663.66px;font-size:16px;font-weight:700;color:#000;letter-spacing:-0.15px">bracket for bumper</div>
<div class="t" style="left:968px;top:663.66px;font-size:16px;font-weight:700;color:#000;letter-spacing:-0.15px">rear</div>
<div class="t" style="left:1090px;top:663.66px;font-size:16px;font-weight:700;color:#000;letter-spacing:0px">3</div>
<div style="position:absolute;left:0;top:770.8px;width:1183px;height:1px;background:#c4c4c4"></div>
<div class="t" style="left:29.200000000000045px;top:708.56px;font-size:16px;font-weight:700;color:#000;letter-spacing:0px"><span style="display:inline-block;transform:translateX(-50%)">8</span></div>
<div class="t" style="left:101.59999999999991px;top:706.70px;font-size:19px;font-weight:700;color:#000;letter-spacing:-0.05px">10A 813 323</div>
<div class="t" style="left:279.5999999999999px;top:707.56px;font-size:16px;font-weight:700;color:#000;letter-spacing:-0.15px">reinforcement for</div>
<div class="t" style="left:279.5999999999999px;top:729.56px;font-size:16px;font-weight:700;color:#000;letter-spacing:-0.15px">lock carrier</div>
<div class="t" style="left:968px;top:707.56px;font-size:16px;font-weight:700;color:#000;letter-spacing:-0.15px">rear center</div>
<div class="t" style="left:1090px;top:707.56px;font-size:16px;font-weight:700;color:#000;letter-spacing:0px">1</div>
<div style="position:absolute;left:0;top:835.5px;width:1183px;height:1px;background:#c4c4c4"></div>
<div class="t" style="left:29.200000000000045px;top:774.86px;font-size:16px;font-weight:700;color:#000;letter-spacing:0px"><span style="display:inline-block;transform:translateX(-50%)">9</span></div>
<div class="t" style="left:101.59999999999991px;top:773.00px;font-size:19px;font-weight:700;color:#000;letter-spacing:-0.05px">2G0 803 849 C</div>
<div class="t" style="left:279.5999999999999px;top:773.86px;font-size:16px;font-weight:700;color:#000;letter-spacing:-0.15px">tie-down eye</div>
<div class="t" style="left:968px;top:773.86px;font-size:16px;font-weight:700;color:#000;letter-spacing:-0.15px">left a. right</div>
<div class="t" style="left:1090px;top:773.86px;font-size:16px;font-weight:700;color:#000;letter-spacing:0px">2</div>
</div>
<div style="position:absolute;left:2537.1px;top:182px;width:16px;height:800.4px;background:#f0f0f0"></div>
<div style="position:absolute;left:2537.1px;top:199.1px;width:14.8px;height:487.8px;background:#cdcdcd"></div>
<svg style="left:2537px;top:182px" width="16" height="800"><path d="M4.5,11.5 L8,8 L11.5,11.5" fill="none" stroke="#444" stroke-width="1.6"/><path d="M4.5,788.5 L8,792 L11.5,788.5" fill="none" stroke="#444" stroke-width="1.6"/></svg>
<div style="position:absolute;left:0px;top:986.6px;width:2553px;height:1.6px;background:#000"></div>
<svg style="left:0;top:0" width="2553" height="1215" viewBox="0 0 2553 1215"><g id="illA"><path d="M598.1,393.6 L607.2,393.6 L632.5,400.8 L643.4,399.9 L648.8,407.2 L739.4,454.2 L846.2,519.4 L848.0,516.7 L849.8,524.9 L866.1,539.4 L871.6,550.2 L872.5,570.1 L869.8,579.2 L864.3,579.2 L808.2,539.4 L804.6,532.1 L710.4,475.1 L674.2,463.3 L650.6,452.4 L601.7,427.1 L597.2,419.8 Z" fill="#94afc1" stroke="#23384a" stroke-width="1.25" stroke-linejoin="round" />
<path d="M601.0,422.0 L612.0,427.0 L650.0,449.0 L675.0,460.0 L710.0,472.0 L806.0,529.0 L810.0,536.0 L866.0,576.0 L869.0,566.0 L862.0,560.0 L810.0,528.0 L740.0,487.0 L700.0,466.0 L650.0,440.0 L605.0,415.0 Z" fill="#bad0dc" stroke="none" stroke-width="0" stroke-linejoin="round" />
<path d="M603.0,398.0 L620.0,401.0 L606.0,420.0 Z" fill="#7f9db0" stroke="none" stroke-width="0" stroke-linejoin="round" />
<ellipse cx="638" cy="421" rx="4.5" ry="4" fill="#7f9db0" stroke="#23384a" stroke-width="0.8"/>
<ellipse cx="669" cy="430" rx="4.5" ry="4" fill="#7f9db0" stroke="#23384a" stroke-width="0.8"/>
<ellipse cx="729" cy="465" rx="4.5" ry="4" fill="#7f9db0" stroke="#23384a" stroke-width="0.8"/>
<ellipse cx="781" cy="492" rx="4.5" ry="4" fill="#7f9db0" stroke="#23384a" stroke-width="0.8"/>
<ellipse cx="836" cy="532" rx="4.5" ry="4" fill="#7f9db0" stroke="#23384a" stroke-width="0.8"/>
<path d="M676.0,433.0 L716.0,452.0 L716.0,458.0 L676.0,439.0 Z" fill="#7f9db0" stroke="#23384a" stroke-width="0.6" stroke-linejoin="round" />
<path d="M735.0,462.0 L776.0,484.0 L776.0,490.0 L735.0,468.0 Z" fill="#7f9db0" stroke="#23384a" stroke-width="0.6" stroke-linejoin="round" />
<path d="M790.0,493.0 L826.0,515.0 L826.0,521.0 L790.0,499.0 Z" fill="#7f9db0" stroke="#23384a" stroke-width="0.6" stroke-linejoin="round" />
<path d="M744.4,434.3 L744.4,455.2" fill="none" stroke="#222" stroke-width="0.9"/>
<text x="744.4" y="435.5" font-size="11.5" fill="#1a1a1a" font-family="Liberation Sans" text-anchor="middle">1</text>
<path d="M643.4,532.1 L657.9,514.9 L690.5,533.9 L688.7,543.0 L683.2,558.4 L647.0,537.6 Z" fill="#94afc1" stroke="#23384a" stroke-width="1.25" stroke-linejoin="round" />
<path d="M647.0,536.0 L655.0,527.0 L686.0,545.0 L683.0,556.0 Z" fill="#7f9db0" stroke="none" stroke-width="0" stroke-linejoin="round" />
<circle cx="655" cy="524" r="1.6" fill="#fff" stroke="#23384a" stroke-width="0.5"/>
<circle cx="662" cy="530" r="1.6" fill="#fff" stroke="#23384a" stroke-width="0.5"/>
<circle cx="669" cy="533" r="1.6" fill="#fff" stroke="#23384a" stroke-width="0.5"/>
<circle cx="676" cy="537" r="1.6" fill="#fff" stroke="#23384a" stroke-width="0.5"/>
<path d="M483.5,482.4 L577.0,482.4 L653.3,516.6" fill="none" stroke="#222" stroke-width="0.9"/>
<text x="477.5" y="486.6" font-size="11.5" fill="#1a1a1a" font-family="Liberation Sans" text-anchor="middle">8</text>
<path d="M502.7,521.9 L519.0,520.0 L528.2,519.3 L555.9,500.8 L741.6,604.9 L740.2,615.4 L737.6,620.7 L736.3,631.2 L758.7,660.2 L765.3,689.1 L753.4,683.9 L748.1,694.4 L738.9,689.1 L729.7,697.0 L727.1,718.1 L720.5,716.8 L719.2,712.8 L671.8,691.8 L613.8,660.2 L550.6,628.6 L540.1,610.1 L537.4,591.7 L529.5,573.2 L524.3,565.3 L523.0,541.6 L502.7,539.0 Z" fill="#94afc1" stroke="#23384a" stroke-width="1.25" stroke-linejoin="round" />
<path d="M528.2,519.3 L555.9,500.8 L741.6,604.9 L737.6,620.7 L731.6,619.9 L546.0,519.6 L535.0,522.0 Z" fill="#bad0dc" stroke="#23384a" stroke-width="0.8" stroke-linejoin="round" />
<path d="M548.0,514.0 L733.5,612.3" fill="none" stroke="#23384a" stroke-width="0.6"/>
<path d="M566.9,540.4 L578.3,544.2 L703.2,616.1 L705.0,674.8 L674.8,665.3 L665.3,638.8 L616.1,608.6 L601.0,616.1 L572.6,602.9 L566.9,589.6 Z" fill="#88a6b9" stroke="#23384a" stroke-width="0.7" stroke-linejoin="round" />
<path d="M567.0,546.0 L578.0,548.0 L578.0,606.0 L572.0,603.0 L567.0,590.0 Z" fill="#86a3b5" stroke="none" stroke-width="0" stroke-linejoin="round" />
<path d="M584,568.8 L640.7,593.4" stroke="#23384a" stroke-width="3.2" stroke-linecap="round" fill="none"/>
<path d="M584,568.8 L640.7,593.4" stroke="#c0d3de" stroke-width="1.6" stroke-linecap="round" fill="none"/>
<path d="M584,580.2 L640,604" stroke="#23384a" stroke-width="3.2" stroke-linecap="round" fill="none"/>
<path d="M584,580.2 L640,604" stroke="#c0d3de" stroke-width="1.6" stroke-linecap="round" fill="none"/>
<path d="M654,599 L699.4,646.4" stroke="#23384a" stroke-width="3.2" stroke-linecap="round" fill="none"/>
<path d="M654,599 L699.4,646.4" stroke="#c0d3de" stroke-width="1.6" stroke-linecap="round" fill="none"/>
<path d="M650,606 L697,655" stroke="#23384a" stroke-width="3.2" stroke-linecap="round" fill="none"/>
<path d="M650,606 L697,655" stroke="#c0d3de" stroke-width="1.6" stroke-linecap="round" fill="none"/>
<path d="M644.5,578.3 L644.5,616.1" fill="none" stroke="#23384a" stroke-width="0.8"/>
<ellipse cx="588" cy="596" rx="4" ry="7" transform="rotate(-50 588 596)" fill="none" stroke="#23384a" stroke-width="0.8"/>
<path d="M532.8,551.8 L546.0,554.0 L548.0,574.5 L535.0,570.0 Z" fill="#f2f6f8" stroke="#23384a" stroke-width="0.7" stroke-linejoin="round" />
<path d="M724.0,661.5 L739.0,665.0 L741.0,682.4 L727.0,679.0 Z" fill="#f2f6f8" stroke="#23384a" stroke-width="0.7" stroke-linejoin="round" />
<circle cx="518.7" cy="530" r="3.5" fill="#dfe9ef" stroke="#23384a" stroke-width="0.8"/>
<circle cx="553.7" cy="593.4" r="3.5" fill="#dfe9ef" stroke="#23384a" stroke-width="0.8"/>
<circle cx="715.5" cy="686.1" r="3.5" fill="#dfe9ef" stroke="#23384a" stroke-width="0.8"/>
<circle cx="528" cy="535" r="1.3" fill="#e8f0f4"/>
<circle cx="535" cy="540" r="1.3" fill="#e8f0f4"/>
<circle cx="549" cy="553" r="1.3" fill="#e8f0f4"/>
<circle cx="556" cy="549" r="1.3" fill="#e8f0f4"/>
<circle cx="600" cy="522" r="1.3" fill="#e8f0f4"/>
<circle cx="622" cy="536" r="1.3" fill="#e8f0f4"/>
<circle cx="660" cy="556" r="1.3" fill="#e8f0f4"/>
<circle cx="700" cy="579" r="1.3" fill="#e8f0f4"/>
<circle cx="684" cy="617" r="1.3" fill="#e8f0f4"/>
<circle cx="728" cy="645" r="1.3" fill="#e8f0f4"/>
<circle cx="742" cy="640" r="1.3" fill="#e8f0f4"/>
<circle cx="747" cy="660" r="1.3" fill="#e8f0f4"/>
<circle cx="552" cy="610" r="1.3" fill="#e8f0f4"/>
<circle cx="574" cy="618" r="1.3" fill="#e8f0f4"/>
<circle cx="720" cy="700" r="1.3" fill="#e8f0f4"/>
<circle cx="710" cy="706" r="1.3" fill="#e8f0f4"/>
<path d="M479.5,467.9 L471.6,470.5 L471.6,598 L465,602.2 L471.6,606.5 L471.6,728.6 L479.5,735.2" fill="none" stroke="#222" stroke-width="0.9"/>
<text x="459" y="606.5" font-size="11.5" fill="#1a1a1a" font-family="Liberation Sans" text-anchor="middle">2</text>
<path d="M476.9,529.0 L502.7,529.0" fill="none" stroke="#222" stroke-width="0.9"/>
<path d="M483.5,571.4 L499.3,571.4" fill="none" stroke="#222" stroke-width="0.9"/>
<text x="477.5" y="575.5" font-size="11.5" fill="#1a1a1a" font-family="Liberation Sans" text-anchor="middle">9</text>
<path d="M499.3,570.0 L510.0,568.0 L516.4,580.0 L515.0,586.4 L503.0,583.0 Z" fill="#94afc1" stroke="#23384a" stroke-width="0.9" stroke-linejoin="round" />
<path d="M490.0,604.9 L511.0,604.9" fill="none" stroke="#222" stroke-width="0.9"/>
<text x="479.5" y="609.5" font-size="11.5" fill="#1a1a1a" font-family="Liberation Sans" text-anchor="middle">10</text>
<path d="M511.0,602.2 L518.0,606.0 L529.5,609.0 L529.0,614.1 L515.0,612.0 Z" fill="#94afc1" stroke="#23384a" stroke-width="0.9" stroke-linejoin="round" />
<path d="M483.5,633.8 L550.6,633.8" fill="none" stroke="#222" stroke-width="0.9"/>
<text x="477.5" y="638.5" font-size="11.5" fill="#1a1a1a" font-family="Liberation Sans" text-anchor="middle">7</text>
<path d="M549.3,627.2 L556.0,628.0 L557.0,640.0 L562.5,645.0 L560.0,647.0 L551.0,642.0 Z" fill="#94afc1" stroke="#23384a" stroke-width="0.9" stroke-linejoin="round" />
<path d="M490.0,668.0 L577.0,668.0" fill="none" stroke="#222" stroke-width="0.9"/>
<text x="479.5" y="672.5" font-size="11.5" fill="#1a1a1a" font-family="Liberation Sans" text-anchor="middle">11</text>
<path d="M584.0,657.5 L588.0,659.0 L588.0,673.0 L592.8,679.0 L591.0,683.9 L574.3,675.0 L580.0,672.0 Z" fill="#94afc1" stroke="#23384a" stroke-width="0.9" stroke-linejoin="round" />
<path d="M621.7,678.0 L633.6,678.0" fill="none" stroke="#222" stroke-width="0.9"/>
<text x="616" y="682" font-size="11.5" fill="#1a1a1a" font-family="Liberation Sans" text-anchor="middle">7</text>
<path d="M632.3,666.7 L639.0,668.0 L640.0,680.0 L645.4,684.0 L643.0,686.5 L634.0,682.0 Z" fill="#94afc1" stroke="#23384a" stroke-width="0.9" stroke-linejoin="round" />
<path d="M642.8,693.6 L658.6,693.6" fill="none" stroke="#222" stroke-width="0.9"/>
<text x="634" y="697.5" font-size="11.5" fill="#1a1a1a" font-family="Liberation Sans" text-anchor="middle">10</text>
<path d="M657.3,682.5 L661.0,685.0 L662.0,691.0 L671.8,694.0 L670.0,698.3 L660.0,695.0 Z" fill="#94afc1" stroke="#23384a" stroke-width="0.9" stroke-linejoin="round" />
<path d="M641.5,714.1 L654.6,714.1" fill="none" stroke="#222" stroke-width="0.9"/>
<text x="635.5" y="717.5" font-size="11.5" fill="#1a1a1a" font-family="Liberation Sans" text-anchor="middle">9</text>
<path d="M653.3,702.3 L660.0,704.0 L671.8,712.0 L670.0,722.0 L655.0,716.0 Z" fill="#94afc1" stroke="#23384a" stroke-width="0.9" stroke-linejoin="round" />
<path d="M698.1,729.2 L710.0,729.2" fill="none" stroke="#222" stroke-width="0.9"/>
<text x="692" y="733" font-size="11.5" fill="#1a1a1a" font-family="Liberation Sans" text-anchor="middle">7</text>
<path d="M707.3,714.1 L712.0,715.0 L713.0,728.0 L721.8,733.0 L719.0,735.2 L709.0,730.0 Z" fill="#94afc1" stroke="#23384a" stroke-width="0.9" stroke-linejoin="round" />
<path d="M766.5,568.0 L773.1,568.9 L778.8,582.2 L779.7,599.2 L796.8,625.7 L801.5,635.2 L796.8,637.1 L802.5,682.5 L802.5,692.0 L796.8,690.0 L757.0,625.7 L755.1,620.0 L774.1,604.9 L764.6,591.6 L763.7,572.7 Z" fill="#94afc1" stroke="#23384a" stroke-width="1.25" stroke-linejoin="round" />
<path d="M766.0,574.0 L773.0,575.0 L776.0,598.0 L768.0,594.0 Z" fill="#7f9db0" stroke="none" stroke-width="0" stroke-linejoin="round" />
<path d="M766.5,591.6 L779.7,599.2 L800.6,629.5 L796.8,635.2 L776.0,606.8 L764.6,595.4 Z" fill="#bad0dc" stroke="#23384a" stroke-width="0.7" stroke-linejoin="round" />
<ellipse cx="790" cy="645" rx="2.2" ry="3" fill="#eef3f6" stroke="#23384a" stroke-width="0.6"/>
<ellipse cx="791" cy="655" rx="2.2" ry="3" fill="#eef3f6" stroke="#23384a" stroke-width="0.6"/>
<ellipse cx="793" cy="668" rx="2.2" ry="3" fill="#eef3f6" stroke="#23384a" stroke-width="0.6"/>
<path d="M772.0,617.0 L780.0,612.0 L784.0,626.0 L776.0,630.0 Z" fill="#eef3f6" stroke="#23384a" stroke-width="0.6" stroke-linejoin="round" />
<path d="M799.0,690.0 L799.0,707.0" fill="none" stroke="#222" stroke-width="0.9"/>
<text x="799" y="719.2" font-size="11.5" fill="#1a1a1a" font-family="Liberation Sans" text-anchor="middle">6</text>
<path d="M828.0,562.3 L834.6,561.4 L853.6,591.6 L854.5,604.9 L872.5,623.8 L876.3,635.2 L878.2,718.5 L875.3,716.6 L863.0,693.9 L849.8,682.5 L846.0,674.9 L847.9,629.5 L838.4,614.4 L838.4,584.1 Z" fill="#94afc1" stroke="#23384a" stroke-width="1.25" stroke-linejoin="round" />
<path d="M829.0,561.4 L834.6,561.4 L853.6,591.6 L854.5,604.9 L846.0,612.5 L838.4,603.0 L840.3,587.9 Z" fill="#bad0dc" stroke="#23384a" stroke-width="0.7" stroke-linejoin="round" />
<path d="M838.4,610.0 L853.0,604.0 L868.0,622.0 L855.0,640.0 L846.0,630.0 Z" fill="#7f9db0" stroke="#23384a" stroke-width="0.6" stroke-linejoin="round" />
<ellipse cx="855" cy="617" rx="4.5" ry="6" fill="#7f9db0" stroke="#23384a" stroke-width="0.7"/>
<path d="M870.6,648.4 L873.5,650.0 L875.3,695.8 L869.0,686.0 L866.0,660.0 Z" fill="#eef3f6" stroke="#23384a" stroke-width="0.7" stroke-linejoin="round" />
<path d="M877.8,718.5 L877.8,739.3" fill="none" stroke="#222" stroke-width="0.9"/>
<text x="878" y="747.8" font-size="11.5" fill="#1a1a1a" font-family="Liberation Sans" text-anchor="middle">3</text>
<path d="M889.5,586.9 L904.7,585.0 L906.6,587.9 L887.6,606.8 L885.7,627.6 L880.1,623.8 L875.3,612.5 L878.2,599.2 Z" fill="#bad0dc" stroke="#23384a" stroke-width="1.25" stroke-linejoin="round" />
<circle cx="897" cy="593" r="1.3" fill="#fff" stroke="#23384a" stroke-width="0.5"/><circle cx="889" cy="603" r="1.1" fill="#fff" stroke="#23384a" stroke-width="0.5"/>
<path d="M900.5,565.1 L900.5,584.1" fill="none" stroke="#222" stroke-width="0.9"/>
<text x="900" y="562.3" font-size="11.5" fill="#1a1a1a" font-family="Liberation Sans" text-anchor="middle">4</text>
<path d="M832.7,715.6 L834.6,716.6 L847.9,745.0 L846.0,750.6 L843.2,746.9 L823.3,727.9 L824.2,724.1 Z" fill="#bad0dc" stroke="#23384a" stroke-width="1.25" stroke-linejoin="round" />
<ellipse cx="833" cy="731" rx="2" ry="1.5" fill="#fff" stroke="#23384a" stroke-width="0.6"/>
<path d="M836.9,743.1 L836.9,760.1" fill="none" stroke="#222" stroke-width="0.9"/>
<text x="837.5" y="770.5" font-size="11.5" fill="#1a1a1a" font-family="Liberation Sans" text-anchor="middle">5</text>
</g><g id="illB">
<path d="M456.4,866 Q456.4,861 468,861 Q479.7,861 479.7,866 L479.7,911 Q479.7,915 468,915 Q456.4,915 456.4,911 Z" fill="#9fb6c6" stroke="#23384a" stroke-width="1.1"/>
<ellipse cx="468" cy="866" rx="11" ry="4.5" fill="#88a3b5" stroke="#23384a" stroke-width="0.8"/>
<rect x="464.5" y="870" width="5" height="44" fill="#dde8ee"/>
<path d="M468.5,915.4 L468.5,928.4" fill="none" stroke="#222" stroke-width="0.9"/>
<text x="468.5" y="940" font-size="11.5" fill="#1a1a1a" font-family="Liberation Sans" text-anchor="middle">12</text>
<path d="M504,889 Q507,886 510,889 L511.5,900 Q514,903 513.9,906 Q507,911 499.2,906 Q499.2,903 502,900 Z" fill="#9fb6c6" stroke="#23384a" stroke-width="0.9"/>
<path d="M507.4,909.0 L507.4,928.4" fill="none" stroke="#222" stroke-width="0.9"/>
<text x="507.4" y="940" font-size="11.5" fill="#1a1a1a" font-family="Liberation Sans" text-anchor="middle">13</text>
<path d="M531.2,895.1 L551.5,884.3 L552.3,900.3 L532.5,912.4 Z" fill="#84a3b6" stroke="#23384a" stroke-width="0.9" stroke-linejoin="round" />
<path d="M554.1,881.3 L572.6,872.7 L572.6,888.2 L554.9,899.0 Z" fill="#84a3b6" stroke="#23384a" stroke-width="0.9" stroke-linejoin="round" />
<path d="M545.4,905.5 L545.4,928.4" fill="none" stroke="#222" stroke-width="0.9"/>
<text x="545" y="940" font-size="11.5" fill="#1a1a1a" font-family="Liberation Sans" text-anchor="middle">14</text></g></svg>
<div style="position:absolute;left:0;top:988px;width:2553px;height:178px;overflow:hidden">
<div style="position:absolute;left:1.4px;top:2px;width:131px;height:174px;border:1.3px solid #b4b4b4;background:#fff"></div>
<svg style="left:1.4px;top:2px" width="131" height="173" viewBox="0 0 131 173"><rect x="25.1" y="26.5" width="6" height="16" transform="rotate(0 28.1 34.5)" fill="#c3d4de" stroke="#6f8898" stroke-width="0.6"/><rect x="43.8" y="26.5" width="6" height="16" transform="rotate(0 46.8 34.5)" fill="#c3d4de" stroke="#6f8898" stroke-width="0.6"/><rect x="61.8" y="26.5" width="6" height="16" transform="rotate(0 64.8 34.5)" fill="#c3d4de" stroke="#6f8898" stroke-width="0.6"/><rect x="79.8" y="26.5" width="6" height="16" transform="rotate(0 82.8 34.5)" fill="#c3d4de" stroke="#6f8898" stroke-width="0.6"/><rect x="98.6" y="26.5" width="6" height="16" transform="rotate(0 101.6 34.5)" fill="#c3d4de" stroke="#6f8898" stroke-width="0.6"/><rect x="25.1" y="62.0" width="6" height="16" transform="rotate(0 28.1 70)" fill="#c3d4de" stroke="#6f8898" stroke-width="0.6"/><rect x="43.8" y="62.0" width="6" height="16" transform="rotate(0 46.8 70)" fill="#c3d4de" stroke="#6f8898" stroke-width="0.6"/><rect x="61.8" y="62.0" width="6" height="16" transform="rotate(0 64.8 70)" fill="#c3d4de" stroke="#6f8898" stroke-width="0.6"/><rect x="79.8" y="62.0" width="6" height="16" transform="rotate(0 82.8 70)" fill="#c3d4de" stroke="#6f8898" stroke-width="0.6"/><rect x="98.6" y="62.0" width="6" height="16" transform="rotate(0 101.6 70)" fill="#c3d4de" stroke="#6f8898" stroke-width="0.6"/><rect x="25.1" y="95.7" width="6" height="16" transform="rotate(0 28.1 103.7)" fill="#c3d4de" stroke="#6f8898" stroke-width="0.6"/><rect x="43.8" y="95.7" width="6" height="16" transform="rotate(0 46.8 103.7)" fill="#c3d4de" stroke="#6f8898" stroke-width="0.6"/><rect x="61.8" y="95.7" width="6" height="16" transform="rotate(0 64.8 103.7)" fill="#c3d4de" stroke="#6f8898" stroke-width="0.6"/><rect x="79.8" y="95.7" width="6" height="16" transform="rotate(0 82.8 103.7)" fill="#c3d4de" stroke="#6f8898" stroke-width="0.6"/><rect x="98.6" y="95.7" width="6" height="16" transform="rotate(0 101.6 103.7)" fill="#c3d4de" stroke="#6f8898" stroke-width="0.6"/><rect x="21.7" y="140.2" width="9" height="7" transform="rotate(-20 26.2 143.7)" fill="#8ea4b3" stroke="#6f8898" stroke-width="0.6"/><path d="M28.1,42.5 L28.1,45.5" fill="none" stroke="#888" stroke-width="0.5"/><rect x="27.0" y="46.7" width="2.2" height="1.6" transform="rotate(0 28.1 47.5)" fill="#8a9aa5" stroke="#6f8898" stroke-width="0.6"/><path d="M46.8,42.5 L46.8,45.5" fill="none" stroke="#888" stroke-width="0.5"/><rect x="45.7" y="46.7" width="2.2" height="1.6" transform="rotate(0 46.8 47.5)" fill="#8a9aa5" stroke="#6f8898" stroke-width="0.6"/><path d="M64.8,42.5 L64.8,45.5" fill="none" stroke="#888" stroke-width="0.5"/><rect x="63.7" y="46.7" width="2.2" height="1.6" transform="rotate(0 64.8 47.5)" fill="#8a9aa5" stroke="#6f8898" stroke-width="0.6"/><path d="M82.8,42.5 L82.8,45.5" fill="none" stroke="#888" stroke-width="0.5"/><rect x="81.7" y="46.7" width="2.2" height="1.6" transform="rotate(0 82.8 47.5)" fill="#8a9aa5" stroke="#6f8898" stroke-width="0.6"/><path d="M101.6,42.5 L101.6,45.5" fill="none" stroke="#888" stroke-width="0.5"/><rect x="100.5" y="46.7" width="2.2" height="1.6" transform="rotate(0 101.6 47.5)" fill="#8a9aa5" stroke="#6f8898" stroke-width="0.6"/><path d="M28.1,78.0 L28.1,80.0" fill="none" stroke="#888" stroke-width="0.5"/><rect x="27.0" y="81.2" width="2.2" height="1.6" transform="rotate(0 28.1 82)" fill="#8a9aa5" stroke="#6f8898" stroke-width="0.6"/><path d="M46.8,78.0 L46.8,80.0" fill="none" stroke="#888" stroke-width="0.5"/><rect x="45.7" y="81.2" width="2.2" height="1.6" transform="rotate(0 46.8 82)" fill="#8a9aa5" stroke="#6f8898" stroke-width="0.6"/><path d="M64.8,78.0 L64.8,80.0" fill="none" stroke="#888" stroke-width="0.5"/><rect x="63.7" y="81.2" width="2.2" height="1.6" transform="rotate(0 64.8 82)" fill="#8a9aa5" stroke="#6f8898" stroke-width="0.6"/><path d="M82.8,78.0 L82.8,80.0" fill="none" stroke="#888" stroke-width="0.5"/><rect x="81.7" y="81.2" width="2.2" height="1.6" transform="rotate(0 82.8 82)" fill="#8a9aa5" stroke="#6f8898" stroke-width="0.6"/><path d="M101.6,78.0 L101.6,80.0" fill="none" stroke="#888" stroke-width="0.5"/><rect x="100.5" y="81.2" width="2.2" height="1.6" transform="rotate(0 101.6 82)" fill="#8a9aa5" stroke="#6f8898" stroke-width="0.6"/><path d="M28.1,111.7 L28.1,114.6" fill="none" stroke="#888" stroke-width="0.5"/><rect x="27.0" y="115.8" width="2.2" height="1.6" transform="rotate(0 28.1 116.6)" fill="#8a9aa5" stroke="#6f8898" stroke-width="0.6"/><path d="M46.8,111.7 L46.8,114.6" fill="none" stroke="#888" stroke-width="0.5"/><rect x="45.7" y="115.8" width="2.2" height="1.6" transform="rotate(0 46.8 116.6)" fill="#8a9aa5" stroke="#6f8898" stroke-width="0.6"/><path d="M64.8,111.7 L64.8,114.6" fill="none" stroke="#888" stroke-width="0.5"/><rect x="63.7" y="115.8" width="2.2" height="1.6" transform="rotate(0 64.8 116.6)" fill="#8a9aa5" stroke="#6f8898" stroke-width="0.6"/><path d="M82.8,111.7 L82.8,114.6" fill="none" stroke="#888" stroke-width="0.5"/><rect x="81.7" y="115.8" width="2.2" height="1.6" transform="rotate(0 82.8 116.6)" fill="#8a9aa5" stroke="#6f8898" stroke-width="0.6"/><path d="M101.6,111.7 L101.6,114.6" fill="none" stroke="#888" stroke-width="0.5"/><rect x="100.5" y="115.8" width="2.2" height="1.6" transform="rotate(0 101.6 116.6)" fill="#8a9aa5" stroke="#6f8898" stroke-width="0.6"/></svg>
<div class="t" style="left:1.4px;width:127px;text-align:right;top:159.4px;font-size:14.2px;font-weight:700;color:#000;transform:scaleX(0.88);transform-origin:100% 50%">800-100</div>
<div style="position:absolute;left:135.4px;top:2px;width:131px;height:174px;border:1.3px solid #b4b4b4;background:#fff"></div>
<svg style="left:135.4px;top:2px" width="131" height="173" viewBox="0 0 131 173"><rect x="15.0" y="42.0" width="4" height="8" transform="rotate(0 17 46)" fill="#c3d4de" stroke="#6f8898" stroke-width="0.6"/><rect x="24.2" y="42.0" width="4" height="8" transform="rotate(0 26.2 46)" fill="#c3d4de" stroke="#6f8898" stroke-width="0.6"/><rect x="39.9" y="37.0" width="4" height="18" transform="rotate(0 41.9 46)" fill="#c3d4de" stroke="#6f8898" stroke-width="0.6"/><rect x="51.7" y="37.0" width="4" height="18" transform="rotate(0 53.7 46)" fill="#c3d4de" stroke="#6f8898" stroke-width="0.6"/><rect x="63.5" y="37.0" width="4" height="18" transform="rotate(0 65.5 46)" fill="#c3d4de" stroke="#6f8898" stroke-width="0.6"/><rect x="76.6" y="37.0" width="4" height="18" transform="rotate(0 78.6 46)" fill="#c3d4de" stroke="#6f8898" stroke-width="0.6"/><rect x="88.4" y="37.0" width="4" height="18" transform="rotate(0 90.4 46)" fill="#c3d4de" stroke="#6f8898" stroke-width="0.6"/><rect x="100.2" y="42.0" width="4" height="8" transform="rotate(0 102.2 46)" fill="#c3d4de" stroke="#6f8898" stroke-width="0.6"/><rect x="112.2" y="42.0" width="4" height="8" transform="rotate(0 114.2 46)" fill="#c3d4de" stroke="#6f8898" stroke-width="0.6"/><rect x="15.0" y="80.5" width="4" height="11" transform="rotate(0 17 86)" fill="#c3d4de" stroke="#6f8898" stroke-width="0.6"/><rect x="27.0" y="80.5" width="4" height="11" transform="rotate(0 29 86)" fill="#c3d4de" stroke="#6f8898" stroke-width="0.6"/><rect x="39.9" y="80.5" width="4" height="11" transform="rotate(0 41.9 86)" fill="#c3d4de" stroke="#6f8898" stroke-width="0.6"/><rect x="51.7" y="80.5" width="4" height="11" transform="rotate(0 53.7 86)" fill="#c3d4de" stroke="#6f8898" stroke-width="0.6"/><rect x="63.5" y="80.5" width="4" height="11" transform="rotate(0 65.5 86)" fill="#c3d4de" stroke="#6f8898" stroke-width="0.6"/><rect x="75.5" y="80.5" width="4" height="11" transform="rotate(0 77.5 86)" fill="#c3d4de" stroke="#6f8898" stroke-width="0.6"/><rect x="88.4" y="80.5" width="4" height="11" transform="rotate(0 90.4 86)" fill="#c3d4de" stroke="#6f8898" stroke-width="0.6"/><rect x="100.2" y="80.5" width="4" height="11" transform="rotate(0 102.2 86)" fill="#c3d4de" stroke="#6f8898" stroke-width="0.6"/><rect x="112.5" y="80.5" width="4" height="11" transform="rotate(0 114.5 86)" fill="#c3d4de" stroke="#6f8898" stroke-width="0.6"/><rect x="25.6" y="121.6" width="4" height="10" transform="rotate(0 27.6 126.6)" fill="#c3d4de" stroke="#6f8898" stroke-width="0.6"/><rect x="38.2" y="121.6" width="4" height="10" transform="rotate(0 40.2 126.6)" fill="#c3d4de" stroke="#6f8898" stroke-width="0.6"/><rect x="49.7" y="121.6" width="4" height="10" transform="rotate(0 51.7 126.6)" fill="#c3d4de" stroke="#6f8898" stroke-width="0.6"/><rect x="62.3" y="121.6" width="4" height="10" transform="rotate(0 64.3 126.6)" fill="#c3d4de" stroke="#6f8898" stroke-width="0.6"/><rect x="74.1" y="121.6" width="4" height="10" transform="rotate(0 76.1 126.6)" fill="#c3d4de" stroke="#6f8898" stroke-width="0.6"/><rect x="91.0" y="109.5" width="20" height="13" transform="rotate(-25 101 116)" fill="#8ea4b3" stroke="#6f8898" stroke-width="0.6"/><path d="M16.5,50.0 L16.5,56.0" fill="none" stroke="#888" stroke-width="0.5"/><rect x="15.4" y="56.2" width="2.2" height="1.6" transform="rotate(0 16.5 57)" fill="#8a9aa5" stroke="#6f8898" stroke-width="0.6"/><path d="M16.5,90.0 L16.5,95.0" fill="none" stroke="#888" stroke-width="0.5"/><rect x="15.4" y="95.2" width="2.2" height="1.6" transform="rotate(0 16.5 96)" fill="#8a9aa5" stroke="#6f8898" stroke-width="0.6"/><path d="M29.0,50.0 L29.0,56.0" fill="none" stroke="#888" stroke-width="0.5"/><rect x="27.9" y="56.2" width="2.2" height="1.6" transform="rotate(0 29 57)" fill="#8a9aa5" stroke="#6f8898" stroke-width="0.6"/><path d="M29.0,90.0 L29.0,95.0" fill="none" stroke="#888" stroke-width="0.5"/><rect x="27.9" y="95.2" width="2.2" height="1.6" transform="rotate(0 29 96)" fill="#8a9aa5" stroke="#6f8898" stroke-width="0.6"/><path d="M40.9,50.0 L40.9,56.0" fill="none" stroke="#888" stroke-width="0.5"/><rect x="39.8" y="56.2" width="2.2" height="1.6" transform="rotate(0 40.9 57)" fill="#8a9aa5" stroke="#6f8898" stroke-width="0.6"/><path d="M40.9,90.0 L40.9,95.0" fill="none" stroke="#888" stroke-width="0.5"/><rect x="39.8" y="95.2" width="2.2" height="1.6" transform="rotate(0 40.9 96)" fill="#8a9aa5" stroke="#6f8898" stroke-width="0.6"/><path d="M53.2,50.0 L53.2,56.0" fill="none" stroke="#888" stroke-width="0.5"/><rect x="52.1" y="56.2" width="2.2" height="1.6" transform="rotate(0 53.2 57)" fill="#8a9aa5" stroke="#6f8898" stroke-width="0.6"/><path d="M53.2,90.0 L53.2,95.0" fill="none" stroke="#888" stroke-width="0.5"/><rect x="52.1" y="95.2" width="2.2" height="1.6" transform="rotate(0 53.2 96)" fill="#8a9aa5" stroke="#6f8898" stroke-width="0.6"/><path d="M65.5,50.0 L65.5,56.0" fill="none" stroke="#888" stroke-width="0.5"/><rect x="64.4" y="56.2" width="2.2" height="1.6" transform="rotate(0 65.5 57)" fill="#8a9aa5" stroke="#6f8898" stroke-width="0.6"/><path d="M65.5,90.0 L65.5,95.0" fill="none" stroke="#888" stroke-width="0.5"/><rect x="64.4" y="95.2" width="2.2" height="1.6" transform="rotate(0 65.5 96)" fill="#8a9aa5" stroke="#6f8898" stroke-width="0.6"/><path d="M77.7,50.0 L77.7,56.0" fill="none" stroke="#888" stroke-width="0.5"/><rect x="76.6" y="56.2" width="2.2" height="1.6" transform="rotate(0 77.7 57)" fill="#8a9aa5" stroke="#6f8898" stroke-width="0.6"/><path d="M77.7,90.0 L77.7,95.0" fill="none" stroke="#888" stroke-width="0.5"/><rect x="76.6" y="95.2" width="2.2" height="1.6" transform="rotate(0 77.7 96)" fill="#8a9aa5" stroke="#6f8898" stroke-width="0.6"/><path d="M89.9,50.0 L89.9,56.0" fill="none" stroke="#888" stroke-width="0.5"/><rect x="88.8" y="56.2" width="2.2" height="1.6" transform="rotate(0 89.9 57)" fill="#8a9aa5" stroke="#6f8898" stroke-width="0.6"/><path d="M89.9,90.0 L89.9,95.0" fill="none" stroke="#888" stroke-width="0.5"/><rect x="88.8" y="95.2" width="2.2" height="1.6" transform="rotate(0 89.9 96)" fill="#8a9aa5" stroke="#6f8898" stroke-width="0.6"/><path d="M102.2,50.0 L102.2,56.0" fill="none" stroke="#888" stroke-width="0.5"/><rect x="101.1" y="56.2" width="2.2" height="1.6" transform="rotate(0 102.2 57)" fill="#8a9aa5" stroke="#6f8898" stroke-width="0.6"/><path d="M102.2,90.0 L102.2,95.0" fill="none" stroke="#888" stroke-width="0.5"/><rect x="101.1" y="95.2" width="2.2" height="1.6" transform="rotate(0 102.2 96)" fill="#8a9aa5" stroke="#6f8898" stroke-width="0.6"/><path d="M114.4,50.0 L114.4,56.0" fill="none" stroke="#888" stroke-width="0.5"/><rect x="113.3" y="56.2" width="2.2" height="1.6" transform="rotate(0 114.4 57)" fill="#8a9aa5" stroke="#6f8898" stroke-width="0.6"/><path d="M114.4,90.0 L114.4,95.0" fill="none" stroke="#888" stroke-width="0.5"/><rect x="113.3" y="95.2" width="2.2" height="1.6" transform="rotate(0 114.4 96)" fill="#8a9aa5" stroke="#6f8898" stroke-width="0.6"/><path d="M27.3,130.0 L27.3,133.0" fill="none" stroke="#888" stroke-width="0.5"/><rect x="26.2" y="133.2" width="2.2" height="1.6" transform="rotate(0 27.3 134)" fill="#8a9aa5" stroke="#6f8898" stroke-width="0.6"/><path d="M39.5,130.0 L39.5,133.0" fill="none" stroke="#888" stroke-width="0.5"/><rect x="38.4" y="133.2" width="2.2" height="1.6" transform="rotate(0 39.5 134)" fill="#8a9aa5" stroke="#6f8898" stroke-width="0.6"/><path d="M51.8,130.0 L51.8,133.0" fill="none" stroke="#888" stroke-width="0.5"/><rect x="50.7" y="133.2" width="2.2" height="1.6" transform="rotate(0 51.8 134)" fill="#8a9aa5" stroke="#6f8898" stroke-width="0.6"/><path d="M64.0,130.0 L64.0,133.0" fill="none" stroke="#888" stroke-width="0.5"/><rect x="62.9" y="133.2" width="2.2" height="1.6" transform="rotate(0 64 134)" fill="#8a9aa5" stroke="#6f8898" stroke-width="0.6"/><path d="M76.3,130.0 L76.3,133.0" fill="none" stroke="#888" stroke-width="0.5"/><rect x="75.2" y="133.2" width="2.2" height="1.6" transform="rotate(0 76.3 134)" fill="#8a9aa5" stroke="#6f8898" stroke-width="0.6"/></svg>
<div class="t" style="left:135.4px;width:127px;text-align:right;top:159.4px;font-size:14.2px;font-weight:700;color:#000;transform:scaleX(0.88);transform-origin:100% 50%">800-110</div>
<div style="position:absolute;left:269.5px;top:2px;width:131px;height:174px;border:1.3px solid #b4b4b4;background:#fff"></div>
<svg style="left:269.5px;top:2px" width="131" height="173" viewBox="0 0 131 173"><rect x="59.0" y="18.0" width="16" height="8" transform="rotate(-25 67 22)" fill="#c3d4de" stroke="#6f8898" stroke-width="0.6"/><rect x="71.0" y="31.0" width="18" height="6" transform="rotate(35 80 34)" fill="#c3d4de" stroke="#6f8898" stroke-width="0.6"/><rect x="60.0" y="37.5" width="12" height="5" transform="rotate(20 66 40)" fill="#c3d4de" stroke="#6f8898" stroke-width="0.6"/><rect x="71.0" y="44.5" width="14" height="5" transform="rotate(30 78 47)" fill="#c3d4de" stroke="#6f8898" stroke-width="0.6"/><rect x="14.0" y="55.0" width="20" height="10" transform="rotate(-25 24 60)" fill="#c3d4de" stroke="#6f8898" stroke-width="0.6"/><rect x="43.0" y="39.0" width="6" height="16" transform="rotate(10 46 47)" fill="#c3d4de" stroke="#6f8898" stroke-width="0.6"/><rect x="56.0" y="45.0" width="16" height="6" transform="rotate(35 64 48)" fill="#c3d4de" stroke="#6f8898" stroke-width="0.6"/><rect x="29.0" y="70.0" width="24" height="8" transform="rotate(-20 41 74)" fill="#c3d4de" stroke="#6f8898" stroke-width="0.6"/><rect x="25.0" y="81.0" width="5" height="8" transform="rotate(0 27.5 85)" fill="#c3d4de" stroke="#6f8898" stroke-width="0.6"/><rect x="47.0" y="79.0" width="6" height="18" transform="rotate(20 50 88)" fill="#c3d4de" stroke="#6f8898" stroke-width="0.6"/><rect x="56.0" y="68.5" width="10" height="5" transform="rotate(-30 61 71)" fill="#c3d4de" stroke="#6f8898" stroke-width="0.6"/><rect x="72.0" y="92.0" width="14" height="8" transform="rotate(30 79 96)" fill="#c3d4de" stroke="#6f8898" stroke-width="0.6"/><rect x="85.0" y="94.0" width="14" height="6" transform="rotate(40 92 97)" fill="#c3d4de" stroke="#6f8898" stroke-width="0.6"/><rect x="99.0" y="99.0" width="16" height="8" transform="rotate(-25 107 103)" fill="#c3d4de" stroke="#6f8898" stroke-width="0.6"/><rect x="22.0" y="112.0" width="22" height="8" transform="rotate(-25 33 116)" fill="#c3d4de" stroke="#6f8898" stroke-width="0.6"/><rect x="36.0" y="120.0" width="22" height="10" transform="rotate(-35 47 125)" fill="#c3d4de" stroke="#6f8898" stroke-width="0.6"/><rect x="56.0" y="118.0" width="16" height="14" transform="rotate(20 64 125)" fill="#c3d4de" stroke="#6f8898" stroke-width="0.6"/><rect x="71.0" y="107.0" width="24" height="10" transform="rotate(25 83 112)" fill="#c3d4de" stroke="#6f8898" stroke-width="0.6"/><rect x="14.5" y="103.5" width="5" height="9" transform="rotate(0 17 108)" fill="#c3d4de" stroke="#6f8898" stroke-width="0.6"/><rect x="14.5" y="125.0" width="5" height="8" transform="rotate(0 17 129)" fill="#c3d4de" stroke="#6f8898" stroke-width="0.6"/><rect x="36.5" y="149.0" width="26" height="12" transform="rotate(25 49.5 155)" fill="#c3d4de" stroke="#6f8898" stroke-width="0.6"/><rect x="85.5" y="149.5" width="5" height="9" transform="rotate(0 88 154)" fill="#c3d4de" stroke="#6f8898" stroke-width="0.6"/><rect x="92.0" y="151.0" width="10" height="6" transform="rotate(-25 97 154)" fill="#c3d4de" stroke="#6f8898" stroke-width="0.6"/></svg>
<div class="t" style="left:269.5px;width:127px;text-align:right;top:159.4px;font-size:14.2px;font-weight:700;color:#000;transform:scaleX(0.88);transform-origin:100% 50%">803-000</div>
<div style="position:absolute;left:403.5px;top:2px;width:131px;height:174px;border:1.3px solid #b4b4b4;background:#fff"></div>
<svg style="left:403.5px;top:2px" width="131" height="173" viewBox="0 0 131 173"><path d="M11.3,21.6 L121.5,21.6" fill="none" stroke="#888" stroke-width="0.5"/><rect x="66.0" y="45.5" width="55" height="7" transform="rotate(27 93.5 49)" fill="#c3d4de" stroke="#6f8898" stroke-width="0.6"/><rect x="58.0" y="60.0" width="58" height="8" transform="rotate(28 87 64)" fill="#c3d4de" stroke="#6f8898" stroke-width="0.6"/><rect x="56.0" y="68.0" width="44" height="14" transform="rotate(30 78 75)" fill="#c3d4de" stroke="#6f8898" stroke-width="0.6"/><rect x="41.0" y="81.0" width="52" height="6" transform="rotate(28 67 84)" fill="#c3d4de" stroke="#6f8898" stroke-width="0.6"/><rect x="12.5" y="70.0" width="14" height="8" transform="rotate(0 19.5 74)" fill="#c3d4de" stroke="#6f8898" stroke-width="0.6"/><rect x="17.0" y="82.0" width="10" height="14" transform="rotate(20 22 89)" fill="#c3d4de" stroke="#6f8898" stroke-width="0.6"/><rect x="13.0" y="106.0" width="8" height="16" transform="rotate(15 17 114)" fill="#c3d4de" stroke="#6f8898" stroke-width="0.6"/><rect x="47.0" y="93.0" width="20" height="6" transform="rotate(30 57 96)" fill="#c3d4de" stroke="#6f8898" stroke-width="0.6"/><rect x="64.0" y="99.5" width="16" height="5" transform="rotate(30 72 102)" fill="#c3d4de" stroke="#6f8898" stroke-width="0.6"/><rect x="80.0" y="111.0" width="20" height="10" transform="rotate(-25 90 116)" fill="#c3d4de" stroke="#6f8898" stroke-width="0.6"/><rect x="81.0" y="121.0" width="6" height="18" transform="rotate(30 84 130)" fill="#c3d4de" stroke="#6f8898" stroke-width="0.6"/><rect x="58.0" y="125.0" width="6" height="18" transform="rotate(40 61 134)" fill="#c3d4de" stroke="#6f8898" stroke-width="0.6"/><rect x="13.5" y="149.0" width="5" height="10" transform="rotate(0 16 154)" fill="#c3d4de" stroke="#6f8898" stroke-width="0.6"/><rect x="25.0" y="152.0" width="10" height="6" transform="rotate(-25 30 155)" fill="#c3d4de" stroke="#6f8898" stroke-width="0.6"/><path d="M68.0,22.0 L68.0,40.0" fill="none" stroke="#888" stroke-width="0.5"/><path d="M94.0,22.0 L94.0,45.0" fill="none" stroke="#888" stroke-width="0.5"/><path d="M116.0,22.0 L116.0,62.0" fill="none" stroke="#888" stroke-width="0.5"/></svg>
<div class="t" style="left:403.5px;width:127px;text-align:right;top:159.4px;font-size:14.2px;font-weight:700;color:#000;transform:scaleX(0.88);transform-origin:100% 50%">803-005</div>
<div style="position:absolute;left:537.6px;top:2px;width:131px;height:174px;border:1.3px solid #b4b4b4;background:#fff"></div>
<svg style="left:537.6px;top:2px" width="131" height="173" viewBox="0 0 131 173"><rect x="18.0" y="22.0" width="18" height="12" transform="rotate(30 27 28)" fill="#c3d4de" stroke="#6f8898" stroke-width="0.6"/><ellipse cx="98" cy="16.4" rx="5" ry="2.2" transform="rotate(0 98 16.4)" fill="#c3d4de" stroke="#6f8898" stroke-width="0.6"/><rect x="27.5" y="40.5" width="30" height="7" transform="rotate(22 42.5 44)" fill="#c3d4de" stroke="#6f8898" stroke-width="0.6"/><rect x="18.0" y="43.0" width="10" height="4" transform="rotate(30 23 45)" fill="#c3d4de" stroke="#6f8898" stroke-width="0.6"/><rect x="52.0" y="52.5" width="24" height="7" transform="rotate(15 64 56)" fill="#c3d4de" stroke="#6f8898" stroke-width="0.6"/><rect x="71.0" y="64.5" width="32" height="9" transform="rotate(25 87 69)" fill="#c3d4de" stroke="#6f8898" stroke-width="0.6"/><rect x="59.0" y="71.0" width="28" height="6" transform="rotate(35 73 74)" fill="#c3d4de" stroke="#6f8898" stroke-width="0.6"/><rect x="39.0" y="80.0" width="32" height="10" transform="rotate(-20 55 85)" fill="#c3d4de" stroke="#6f8898" stroke-width="0.6"/><rect x="29.0" y="109.0" width="46" height="10" transform="rotate(-20 52 114)" fill="#c3d4de" stroke="#6f8898" stroke-width="0.6"/><path d="M50.9,121.4 L92.9,100.4 L119.1,110.9 L76.9,137.0 Z" fill="#c3d4de" stroke="#6f8898" stroke-width="0.6"/><rect x="76.0" y="146.0" width="40" height="8" transform="rotate(-25 96 150)" fill="#c3d4de" stroke="#6f8898" stroke-width="0.6"/><rect x="21.0" y="152.0" width="18" height="6" transform="rotate(-25 30 155)" fill="#c3d4de" stroke="#6f8898" stroke-width="0.6"/></svg>
<div class="t" style="left:537.6px;width:127px;text-align:right;top:159.4px;font-size:14.2px;font-weight:700;color:#000;transform:scaleX(0.88);transform-origin:100% 50%">803-010</div>
<div style="position:absolute;left:671.6px;top:2px;width:131px;height:174px;border:1.3px solid #b4b4b4;background:#fff"></div>
<svg style="left:671.6px;top:2px" width="131" height="173" viewBox="0 0 131 173"><path d="M17.0,17.7 L55.0,17.7" fill="none" stroke="#888" stroke-width="0.5"/><rect x="20.5" y="27.0" width="7" height="16" transform="rotate(10 24 35)" fill="#c3d4de" stroke="#6f8898" stroke-width="0.6"/><rect x="35.0" y="25.0" width="8" height="10" transform="rotate(0 39 30)" fill="#c3d4de" stroke="#6f8898" stroke-width="0.6"/><path d="M22.0,61.0 L40.7,37.4 L47.3,40.0 L47.3,61.0 Z" fill="#c3d4de" stroke="#6f8898" stroke-width="0.6"/><rect x="46.0" y="57.0" width="14" height="8" transform="rotate(30 53 61)" fill="#c3d4de" stroke="#6f8898" stroke-width="0.6"/><rect x="17.5" y="72.5" width="10" height="5" transform="rotate(0 22.5 75)" fill="#c3d4de" stroke="#6f8898" stroke-width="0.6"/><rect x="19.0" y="76.0" width="22" height="8" transform="rotate(-30 30 80)" fill="#c3d4de" stroke="#6f8898" stroke-width="0.6"/><path d="M43.3,89.9 L64.3,71.5 L77.4,76.7 L56.4,100.4 Z" fill="#c3d4de" stroke="#6f8898" stroke-width="0.6"/><rect x="71.0" y="65.0" width="18" height="10" transform="rotate(30 80 70)" fill="#c3d4de" stroke="#6f8898" stroke-width="0.6"/><rect x="30.0" y="94.5" width="36" height="9" transform="rotate(25 48 99)" fill="#c3d4de" stroke="#6f8898" stroke-width="0.6"/><rect x="16.0" y="113.0" width="40" height="10" transform="rotate(28 36 118)" fill="#c3d4de" stroke="#6f8898" stroke-width="0.6"/><rect x="74.0" y="96.0" width="8" height="20" transform="rotate(25 78 106)" fill="#c3d4de" stroke="#6f8898" stroke-width="0.6"/><rect x="88.0" y="85.0" width="16" height="6" transform="rotate(-25 96 88)" fill="#c3d4de" stroke="#6f8898" stroke-width="0.6"/><path d="M90.5,121.4 L98.4,100.4 L114.2,93.8 L114.2,97.7 L102.4,103.0 L94.5,121.4 Z" fill="#c3d4de" stroke="#6f8898" stroke-width="0.6"/><path d="M84.0,130.0 L118.0,130.0" fill="none" stroke="#888" stroke-width="0.5"/><rect x="20.0" y="136.0" width="5" height="10" transform="rotate(0 22.5 141)" fill="#c3d4de" stroke="#6f8898" stroke-width="0.6"/><rect x="36.0" y="140.0" width="12" height="6" transform="rotate(-25 42 143)" fill="#c3d4de" stroke="#6f8898" stroke-width="0.6"/></svg>
<div class="t" style="left:671.6px;width:127px;text-align:right;top:159.4px;font-size:14.2px;font-weight:700;color:#000;transform:scaleX(0.88);transform-origin:100% 50%">803-015</div>
<div style="position:absolute;left:805.6px;top:2px;width:131px;height:174px;border:1.3px solid #b4b4b4;background:#fff"></div>
<svg style="left:805.6px;top:2px" width="131" height="173" viewBox="0 0 131 173"><rect x="13.0" y="67.5" width="28" height="7" transform="rotate(-35 27 71)" fill="#c3d4de" stroke="#6f8898" stroke-width="0.6"/><rect x="25.5" y="48.0" width="5" height="18" transform="rotate(35 28 57)" fill="#c3d4de" stroke="#6f8898" stroke-width="0.6"/><rect x="33.0" y="47.0" width="28" height="6" transform="rotate(-40 47 50)" fill="#c3d4de" stroke="#6f8898" stroke-width="0.6"/><rect x="54.0" y="67.5" width="28" height="7" transform="rotate(30 68 71)" fill="#c3d4de" stroke="#6f8898" stroke-width="0.6"/><rect x="37.0" y="84.0" width="38" height="10" transform="rotate(28 56 89)" fill="#c3d4de" stroke="#6f8898" stroke-width="0.6"/><rect x="14.0" y="85.0" width="6" height="20" transform="rotate(40 17 95)" fill="#c3d4de" stroke="#6f8898" stroke-width="0.6"/><path d="M27.2,103.0 L37.7,97.7 L74.5,116.1 L64.0,122.7 Z" fill="#c3d4de" stroke="#6f8898" stroke-width="0.6"/><rect x="89.0" y="74.0" width="8" height="46" transform="rotate(30 93 97)" fill="#c3d4de" stroke="#6f8898" stroke-width="0.6"/><rect x="95.0" y="77.0" width="6" height="30" transform="rotate(20 98 92)" fill="#c3d4de" stroke="#6f8898" stroke-width="0.6"/><rect x="71.0" y="120.0" width="6" height="20" transform="rotate(35 74 130)" fill="#c3d4de" stroke="#6f8898" stroke-width="0.6"/><rect x="78.0" y="92.0" width="8" height="10" transform="rotate(0 82 97)" fill="#c3d4de" stroke="#6f8898" stroke-width="0.6"/><rect x="17.2" y="147.0" width="5" height="10" transform="rotate(0 19.7 152)" fill="#c3d4de" stroke="#6f8898" stroke-width="0.6"/><rect x="29.0" y="149.5" width="8" height="5" transform="rotate(-25 33 152)" fill="#c3d4de" stroke="#6f8898" stroke-width="0.6"/></svg>
<div class="t" style="left:805.6px;width:127px;text-align:right;top:159.4px;font-size:14.2px;font-weight:700;color:#000;transform:scaleX(0.88);transform-origin:100% 50%">803-020</div>
<div style="position:absolute;left:939.7px;top:2px;width:131px;height:174px;border:1.3px solid #b4b4b4;background:#fff"></div>
<svg style="left:939.7px;top:2px" width="131" height="173" viewBox="0 0 131 173"><path d="M24.3,50.5 L34.8,13.7 L55.8,13.7 L71.6,13.7 L92.5,16.4 L108.3,29.5 L103.0,50.5 L92.5,61.0 L58.3,61.0 L40.0,61.0 Z" fill="#cddbe4" stroke="#6f8898" stroke-width="0.6"/><rect x="91.0" y="58.0" width="18" height="16" transform="rotate(0 100 66)" fill="#c3d4de" stroke="#6f8898" stroke-width="0.6"/><path d="M19.0,118.7 L21.6,92.5 L40.0,79.4 L71.6,76.7 L97.9,87.3 L100.5,108.2 L92.6,126.6 L55.8,129.3 L19.0,121.4 Z" fill="#cddbe4" stroke="#6f8898" stroke-width="0.6"/><ellipse cx="21.8" cy="143.7" rx="4" ry="2.5" transform="rotate(0 21.8 143.7)" fill="#c3d4de" stroke="#6f8898" stroke-width="0.6"/><ellipse cx="40.2" cy="143.7" rx="4" ry="2.5" transform="rotate(0 40.2 143.7)" fill="#c3d4de" stroke="#6f8898" stroke-width="0.6"/><ellipse cx="57.2" cy="143.7" rx="4" ry="2.5" transform="rotate(0 57.2 143.7)" fill="#c3d4de" stroke="#6f8898" stroke-width="0.6"/><ellipse cx="76.9" cy="143.7" rx="4" ry="2.5" transform="rotate(0 76.9 143.7)" fill="#c3d4de" stroke="#6f8898" stroke-width="0.6"/><ellipse cx="94" cy="143.7" rx="4" ry="2.5" transform="rotate(0 94 143.7)" fill="#c3d4de" stroke="#6f8898" stroke-width="0.6"/><ellipse cx="111" cy="143.7" rx="4" ry="2.5" transform="rotate(0 111 143.7)" fill="#c3d4de" stroke="#6f8898" stroke-width="0.6"/><ellipse cx="21.8" cy="159.4" rx="4" ry="2.5" transform="rotate(0 21.8 159.4)" fill="#c3d4de" stroke="#6f8898" stroke-width="0.6"/><ellipse cx="40.2" cy="159.4" rx="4" ry="2.5" transform="rotate(0 40.2 159.4)" fill="#c3d4de" stroke="#6f8898" stroke-width="0.6"/><ellipse cx="57.2" cy="159.4" rx="4" ry="2.5" transform="rotate(0 57.2 159.4)" fill="#c3d4de" stroke="#6f8898" stroke-width="0.6"/><rect x="74.4" y="154.0" width="5" height="8" transform="rotate(20 76.9 158)" fill="#c3d4de" stroke="#6f8898" stroke-width="0.6"/></svg>
<div class="t" style="left:939.7px;width:127px;text-align:right;top:159.4px;font-size:14.2px;font-weight:700;color:#000;transform:scaleX(0.88);transform-origin:100% 50%">803-035</div>
<div style="position:absolute;left:1073.7px;top:2px;width:131px;height:174px;border:1.3px solid #b4b4b4;background:#fff"></div>
<svg style="left:1073.7px;top:2px" width="131" height="173" viewBox="0 0 131 173"><path d="M15.0,39.0 L110.0,39.0 L116.0,47.0 L116.0,81.0 L110.0,89.3 L15.0,89.3 L13.6,72.0 L15.0,47.0 Z" fill="#d5e1e8" stroke="#6f8898" stroke-width="0.6"/><path d="M30.0,39.0 L30.0,89.0" fill="none" stroke="#888" stroke-width="0.5"/><path d="M45.0,39.0 L45.0,89.0" fill="none" stroke="#888" stroke-width="0.5"/><path d="M60.0,39.0 L60.0,89.0" fill="none" stroke="#888" stroke-width="0.5"/><path d="M75.0,39.0 L75.0,89.0" fill="none" stroke="#888" stroke-width="0.5"/><path d="M90.0,39.0 L90.0,89.0" fill="none" stroke="#888" stroke-width="0.5"/><path d="M105.0,39.0 L105.0,89.0" fill="none" stroke="#888" stroke-width="0.5"/><path d="M15.0,52.0 L116.0,52.0" fill="none" stroke="#888" stroke-width="0.5"/><path d="M15.0,64.0 L116.0,64.0" fill="none" stroke="#888" stroke-width="0.5"/><path d="M15.0,76.0 L116.0,76.0" fill="none" stroke="#888" stroke-width="0.5"/><ellipse cx="21.8" cy="121.4" rx="4.5" ry="2.5" transform="rotate(0 21.8 121.4)" fill="#c3d4de" stroke="#6f8898" stroke-width="0.6"/><ellipse cx="40.2" cy="121.4" rx="4.5" ry="2.5" transform="rotate(0 40.2 121.4)" fill="#c3d4de" stroke="#6f8898" stroke-width="0.6"/><ellipse cx="58.5" cy="121.4" rx="4.5" ry="2.5" transform="rotate(0 58.5 121.4)" fill="#c3d4de" stroke="#6f8898" stroke-width="0.6"/><ellipse cx="76.9" cy="121.4" rx="4.5" ry="2.5" transform="rotate(0 76.9 121.4)" fill="#c3d4de" stroke="#6f8898" stroke-width="0.6"/><ellipse cx="94" cy="121.4" rx="4.5" ry="2.5" transform="rotate(0 94 121.4)" fill="#c3d4de" stroke="#6f8898" stroke-width="0.6"/><ellipse cx="111" cy="121.4" rx="4.5" ry="2.5" transform="rotate(0 111 121.4)" fill="#c3d4de" stroke="#6f8898" stroke-width="0.6"/><ellipse cx="21.8" cy="141" rx="4.5" ry="2.5" transform="rotate(0 21.8 141)" fill="#c3d4de" stroke="#6f8898" stroke-width="0.6"/><ellipse cx="40.2" cy="141" rx="4.5" ry="2.5" transform="rotate(0 40.2 141)" fill="#c3d4de" stroke="#6f8898" stroke-width="0.6"/><ellipse cx="58.5" cy="141" rx="4.5" ry="2.5" transform="rotate(0 58.5 141)" fill="#c3d4de" stroke="#6f8898" stroke-width="0.6"/><ellipse cx="76.9" cy="141" rx="4.5" ry="2.5" transform="rotate(0 76.9 141)" fill="#c3d4de" stroke="#6f8898" stroke-width="0.6"/><ellipse cx="94" cy="141" rx="4.5" ry="2.5" transform="rotate(0 94 141)" fill="#c3d4de" stroke="#6f8898" stroke-width="0.6"/><ellipse cx="111" cy="141" rx="4.5" ry="2.5" transform="rotate(0 111 141)" fill="#c3d4de" stroke="#6f8898" stroke-width="0.6"/><ellipse cx="21.8" cy="158" rx="4.5" ry="2.5" transform="rotate(0 21.8 158)" fill="#c3d4de" stroke="#6f8898" stroke-width="0.6"/><ellipse cx="40.2" cy="158" rx="4.5" ry="2.5" transform="rotate(0 40.2 158)" fill="#c3d4de" stroke="#6f8898" stroke-width="0.6"/></svg>
<div class="t" style="left:1073.7px;width:127px;text-align:right;top:159.4px;font-size:14.2px;font-weight:700;color:#000;transform:scaleX(0.88);transform-origin:100% 50%">803-036</div>
<div style="position:absolute;left:1207.8px;top:2px;width:131px;height:174px;border:1.3px solid #b4b4b4;background:#fff"></div>
<svg style="left:1207.8px;top:2px" width="131" height="173" viewBox="0 0 131 173"><rect x="12.0" y="110.5" width="100" height="5" transform="rotate(16 62 113)" fill="#c3d4de" stroke="#6f8898" stroke-width="0.6"/><path d="M55.9,71.5 L74.3,66.2 L95.3,84.6 L92.6,103.0 L74.3,108.2 L55.9,97.7 Z" fill="#c3d4de" stroke="#6f8898" stroke-width="0.6"/><rect x="65.0" y="62.5" width="50" height="7" transform="rotate(15 90 66)" fill="#c3d4de" stroke="#6f8898" stroke-width="0.6"/><rect x="32.0" y="85.0" width="38" height="8" transform="rotate(12 51 89)" fill="#c3d4de" stroke="#6f8898" stroke-width="0.6"/><rect x="106.0" y="84.0" width="8" height="14" transform="rotate(0 110 91)" fill="#c3d4de" stroke="#6f8898" stroke-width="0.6"/></svg>
<div class="t" style="left:1207.8px;width:127px;text-align:right;top:159.4px;font-size:14.2px;font-weight:700;color:#000;transform:scaleX(0.88);transform-origin:100% 50%">805-000</div>
<div style="position:absolute;left:1341.8px;top:2px;width:131px;height:174px;border:1.3px solid #b4b4b4;background:#fff"></div>
<svg style="left:1341.8px;top:2px" width="131" height="173" viewBox="0 0 131 173"><path d="M36.3,45.2 L69.1,37.4 L84.8,47.9 L97.9,61.0 L90.0,63.6 L71.7,67.6 L50.7,55.7 L37.5,50.5 Z" fill="#c3d4de" stroke="#6f8898" stroke-width="0.6"/><path d="M17.9,97.7 L37.6,82.0 L63.9,76.7 L103.2,97.7 L113.7,105.6 L76.9,121.4 L71.7,131.9 L63.9,129.3 L50.7,113.5 L19.2,103.0 Z" fill="#c3d4de" stroke="#6f8898" stroke-width="0.6"/><path d="M38.0,52.0 L38.0,86.0" fill="none" stroke="#888" stroke-width="0.5"/><path d="M95.0,60.0 L95.0,98.0" fill="none" stroke="#888" stroke-width="0.5"/></svg>
<div class="t" style="left:1341.8px;width:127px;text-align:right;top:159.4px;font-size:14.2px;font-weight:700;color:#000;transform:scaleX(0.88);transform-origin:100% 50%">805-100</div>
<div style="position:absolute;left:1475.8px;top:2px;width:131px;height:174px;border:1.3px solid #b4b4b4;background:#fff"></div>
<svg style="left:1475.8px;top:2px" width="131" height="173" viewBox="0 0 131 173"><rect x="37.0" y="18.0" width="46" height="12" transform="rotate(20 60 24)" fill="#c3d4de" stroke="#6f8898" stroke-width="0.6"/><path d="M53.8,42.6 L59.0,32.1 L74.8,50.5 L98.4,53.0 L95.8,61.0 L69.6,61.0 L56.4,55.7 Z" fill="#c3d4de" stroke="#6f8898" stroke-width="0.6"/><path d="M51.2,76.7 L59.0,58.4 L74.8,74.1 L95.8,79.4 L93.2,87.2 L69.6,92.5 L53.8,87.2 Z" fill="#c3d4de" stroke="#6f8898" stroke-width="0.6"/><path d="M32.8,92.5 L40.7,76.7 L48.6,97.7 L82.7,100.4 L80.1,116.1 L59.0,116.1 L35.4,105.6 Z" fill="#c3d4de" stroke="#6f8898" stroke-width="0.6"/><rect x="22.0" y="116.5" width="50" height="7" transform="rotate(25 47 120)" fill="#c3d4de" stroke="#6f8898" stroke-width="0.6"/><rect x="15.0" y="125.0" width="50" height="10" transform="rotate(25 40 130)" fill="#c3d4de" stroke="#6f8898" stroke-width="0.6"/><rect x="11.0" y="148.0" width="50" height="8" transform="rotate(30 36 152)" fill="#c3d4de" stroke="#6f8898" stroke-width="0.6"/></svg>
<div class="t" style="left:1475.8px;width:127px;text-align:right;top:159.4px;font-size:14.2px;font-weight:700;color:#000;transform:scaleX(0.88);transform-origin:100% 50%">807-000</div>
<div style="position:absolute;left:1609.9px;top:2px;width:131px;height:174px;border:1.3px solid #b4b4b4;background:#fff"></div>
<svg style="left:1609.9px;top:2px" width="131" height="173" viewBox="0 0 131 173"><path d="M25.7,71.5 L38.8,61.0 L55.9,68.9 L42.7,80.7 Z" fill="#c3d4de" stroke="#6f8898" stroke-width="0.6"/><rect x="87.3" y="58.5" width="8" height="15" transform="rotate(0 91.3 66)" fill="#c3d4de" stroke="#6f8898" stroke-width="0.6"/><path d="M33.6,97.7 L55.9,91.2 L58.5,124.0 L36.2,131.9 Z" fill="#7f9aab" stroke="#6f8898" stroke-width="0.6"/><rect x="86.3" y="95.5" width="10" height="23" transform="rotate(0 91.3 107)" fill="#c3d4de" stroke="#6f8898" stroke-width="0.6"/></svg>
<div class="t" style="left:1609.9px;width:127px;text-align:right;top:159.4px;font-size:14.2px;font-weight:700;color:#000;transform:scaleX(0.88);transform-origin:100% 50%">807-049</div>
<div style="position:absolute;left:1743.9px;top:2px;width:131px;height:174px;border:1.3px solid #b4b4b4;background:#fff"></div>
<svg style="left:1743.9px;top:2px" width="131" height="173" viewBox="0 0 131 173"><rect x="15.0" y="41.0" width="46" height="8" transform="rotate(-25 38 45)" fill="#c3d4de" stroke="#6f8898" stroke-width="0.6"/><rect x="39.0" y="61.0" width="38" height="6" transform="rotate(-30 58 64)" fill="#c3d4de" stroke="#6f8898" stroke-width="0.6"/><path d="M27.0,87.2 L37.5,82.0 L69.0,82.0 L92.6,50.5 L97.9,61.0 L90.0,89.9 L63.8,108.2 L42.8,110.9 L29.7,103.0 Z" fill="#c3d4de" stroke="#6f8898" stroke-width="0.6"/><rect x="46.0" y="110.0" width="42" height="8" transform="rotate(-25 67 114)" fill="#c3d4de" stroke="#6f8898" stroke-width="0.6"/><path d="M61.1,139.7 L69.0,126.6 L111.0,103.0 L117.6,110.9 L108.4,129.3 L69.0,145.0 Z" fill="#c3d4de" stroke="#6f8898" stroke-width="0.6"/><rect x="7.0" y="76.0" width="26" height="6" transform="rotate(-20 20 79)" fill="#c3d4de" stroke="#6f8898" stroke-width="0.6"/></svg>
<div class="t" style="left:1743.9px;width:127px;text-align:right;top:159.4px;font-size:14.2px;font-weight:700;color:#000;transform:scaleX(0.88);transform-origin:100% 50%">807-050</div>
<div style="position:absolute;left:1878.0px;top:2px;width:131px;height:174px;border:1.3px solid #b4b4b4;background:#fff"></div>
<svg style="left:1878.0px;top:2px" width="131" height="173" viewBox="0 0 131 173"><rect x="46.0" y="38.0" width="62" height="4" transform="rotate(-42 77 40)" fill="#c3d4de" stroke="#6f8898" stroke-width="0.6"/><rect x="58.0" y="30.0" width="6" height="28" transform="rotate(0 61 44)" fill="#c3d4de" stroke="#6f8898" stroke-width="0.6"/><rect x="73.0" y="18.0" width="16" height="14" transform="rotate(0 81 25)" fill="#c3d4de" stroke="#6f8898" stroke-width="0.6"/><path d="M71.7,63.6 L77.0,45.2 L90.0,37.4 L90.0,41.3 L81.0,47.9 L75.6,63.6 Z" fill="#c3d4de" stroke="#6f8898" stroke-width="0.6"/><rect x="38.0" y="78.0" width="48" height="8" transform="rotate(-20 62 82)" fill="#c3d4de" stroke="#6f8898" stroke-width="0.6"/><rect x="22.0" y="67.0" width="16" height="14" transform="rotate(0 30 74)" fill="#c3d4de" stroke="#6f8898" stroke-width="0.6"/><rect x="44.0" y="97.5" width="62" height="5" transform="rotate(-48 75 100)" fill="#c3d4de" stroke="#6f8898" stroke-width="0.6"/><rect x="64.0" y="95.0" width="8" height="36" transform="rotate(0 68 113)" fill="#c3d4de" stroke="#6f8898" stroke-width="0.6"/><rect x="94.0" y="78.0" width="10" height="16" transform="rotate(0 99 86)" fill="#c3d4de" stroke="#6f8898" stroke-width="0.6"/><rect x="57.0" y="148.0" width="50" height="8" transform="rotate(-25 82 152)" fill="#c3d4de" stroke="#6f8898" stroke-width="0.6"/><rect x="29.0" y="145.0" width="10" height="16" transform="rotate(0 34 153)" fill="#c3d4de" stroke="#6f8898" stroke-width="0.6"/><rect x="21.0" y="135.0" width="16" height="10" transform="rotate(0 29 140)" fill="#c3d4de" stroke="#6f8898" stroke-width="0.6"/><rect x="90.5" y="146.0" width="5" height="10" transform="rotate(0 93 151)" fill="#c3d4de" stroke="#6f8898" stroke-width="0.6"/><rect x="102.0" y="148.0" width="12" height="6" transform="rotate(-25 108 151)" fill="#c3d4de" stroke="#6f8898" stroke-width="0.6"/></svg>
<div class="t" style="left:1878.0px;width:127px;text-align:right;top:159.4px;font-size:14.2px;font-weight:700;color:#000;transform:scaleX(0.88);transform-origin:100% 50%">809-000</div>
<div style="position:absolute;left:2012.0px;top:2px;width:131px;height:174px;border:1.3px solid #b4b4b4;background:#fff"></div>
<svg style="left:2012.0px;top:2px" width="131" height="173" viewBox="0 0 131 173"><path d="M20.4,69.6 L33.7,45.7 L54.9,32.5 L65.5,28.5 L65.5,33.8 L57.6,37.8 L39.0,51.0 L31.0,69.6 L33.7,85.5 L76.1,59.0 L84.0,53.7 L84.0,61.6 L28.4,88.2 L23.1,85.5 Z" fill="#c3d4de" stroke="#6f8898" stroke-width="0.6"/><path d="M76.1,98.8 L94.7,93.5 L113.2,98.8 L118.5,109.4 L115.9,117.3 L100.0,114.7 L92.0,125.3 L86.7,141.2 L78.8,133.2 Z" fill="#c3d4de" stroke="#6f8898" stroke-width="0.6"/><rect x="23.2" y="136.0" width="5" height="10" transform="rotate(0 25.7 141)" fill="#c3d4de" stroke="#6f8898" stroke-width="0.6"/><rect x="33.0" y="137.0" width="12" height="6" transform="rotate(-25 39 140)" fill="#c3d4de" stroke="#6f8898" stroke-width="0.6"/><path d="M40.0,24.0 L65.0,24.0" fill="none" stroke="#888" stroke-width="0.5"/></svg>
<div class="t" style="left:2012.0px;width:127px;text-align:right;top:159.4px;font-size:14.2px;font-weight:700;color:#000;transform:scaleX(0.88);transform-origin:100% 50%">809-040</div>
<div style="position:absolute;left:2146.0px;top:2px;width:131px;height:174px;border:1.3px solid #b4b4b4;background:#fff"></div>
<svg style="left:2146.0px;top:2px" width="131" height="173" viewBox="0 0 131 173"><path d="M27.1,51.0 L29.7,32.5 L45.6,19.2 L74.7,16.6 L101.2,24.5 L106.5,35.1 L101.2,45.7 L82.7,53.7 L61.5,61.6 L37.6,56.3 Z" fill="#cddbe4" stroke="#6f8898" stroke-width="0.6"/><ellipse cx="62" cy="105" rx="20" ry="10" transform="rotate(-20 62 105)" fill="#c3d4de" stroke="#6f8898" stroke-width="0.6"/><path d="M93.3,85.5 L106.5,77.5 L110.5,85.5 L106.5,98.8 L95.9,101.5 Z" fill="#c3d4de" stroke="#6f8898" stroke-width="0.6"/><path d="M18.0,130.0 L35.0,128.0 L40.0,118.0 L42.0,112.0" fill="none" stroke="#888" stroke-width="0.5"/><path d="M36.0,83.0 L90.0,83.0" fill="none" stroke="#888" stroke-width="0.5"/><rect x="37.5" y="88.0" width="5" height="8" transform="rotate(0 40 92)" fill="#c3d4de" stroke="#6f8898" stroke-width="0.6"/><rect x="58.0" y="89.0" width="8" height="4" transform="rotate(0 62 91)" fill="#c3d4de" stroke="#6f8898" stroke-width="0.6"/></svg>
<div class="t" style="left:2146.0px;width:127px;text-align:right;top:159.4px;font-size:14.2px;font-weight:700;color:#000;transform:scaleX(0.88);transform-origin:100% 50%">809-050</div>
<div style="position:absolute;left:2280.1px;top:2px;width:131px;height:174px;border:2.5px solid #3a3a3a;background:#fff"></div>
<svg style="left:2280.1px;top:2px" width="131" height="173" viewBox="0 0 131 173"><g transform="translate(-92.6 -49.8) scale(0.233)"><use href="#illA"/></g><g transform="translate(-92.6 -61.8) scale(0.233)"><use href="#illB"/></g></svg>
<div class="t" style="left:2280.1px;width:127px;text-align:right;top:159.4px;font-size:14.2px;font-weight:700;color:#000;transform:scaleX(0.88);transform-origin:100% 50%">813-000</div>
<div style="position:absolute;left:2414.1px;top:2px;width:131px;height:174px;border:1.3px solid #b4b4b4;background:#fff"></div>
<svg style="left:2414.1px;top:2px" width="131" height="173" viewBox="0 0 131 173"><path d="M28.1,48.4 L53.3,32.5 L79.8,28.5 L93.0,32.5 L69.2,56.3 L45.3,64.3 Z" fill="#c3d4de" stroke="#6f8898" stroke-width="0.6"/><rect x="81.5" y="31.5" width="28" height="4" transform="rotate(30 95.5 33.5)" fill="#c3d4de" stroke="#6f8898" stroke-width="0.6"/><rect x="27.5" y="56.0" width="30" height="6" transform="rotate(25 42.5 59)" fill="#c3d4de" stroke="#6f8898" stroke-width="0.6"/><path d="M60.0,64.3 L77.2,53.7 L94.5,61.6 L77.2,72.3 Z" fill="#c3d4de" stroke="#6f8898" stroke-width="0.6"/><path d="M65.2,93.5 L74.5,86.8 L103.7,98.8 L98.4,106.7 L82.5,109.4 Z" fill="#c3d4de" stroke="#6f8898" stroke-width="0.6"/><path d="M29.4,114.7 L32.1,112.0 L55.9,125.3 L71.8,112.0 L71.8,117.3 L55.9,130.6 Z" fill="#c3d4de" stroke="#6f8898" stroke-width="0.6"/><rect x="40.0" y="150.5" width="14" height="5" transform="rotate(-35 47 153)" fill="#c3d4de" stroke="#6f8898" stroke-width="0.6"/><rect x="76.5" y="17.0" width="5" height="8" transform="rotate(0 79 21)" fill="#c3d4de" stroke="#6f8898" stroke-width="0.6"/><rect x="82.5" y="81.0" width="5" height="8" transform="rotate(0 85 85)" fill="#c3d4de" stroke="#6f8898" stroke-width="0.6"/></svg>
<div class="t" style="left:2414.1px;width:127px;text-align:right;top:159.4px;font-size:14.2px;font-weight:700;color:#000;transform:scaleX(0.88);transform-origin:100% 50%">817-000</div>
<div style="position:absolute;left:2548.2px;top:2px;width:131px;height:174px;border:1.3px solid #b4b4b4;background:#fff"></div>
<svg style="left:2548.2px;top:2px" width="131" height="173" viewBox="0 0 131 173"></svg>
</div>
<div style="position:absolute;left:0px;top:1166.5px;width:2553px;height:17px;background:#f0f0f0"></div>
<div style="position:absolute;left:17.8px;top:1167.5px;width:607.4px;height:15px;background:#cdcdcd"></div>
<svg style="left:0;top:1166px" width="2553" height="18"><path d="M10,5.5 L6.5,9 L10,12.5" fill="none" stroke="#444" stroke-width="1.6"/><path d="M2541.5,5.5 L2545,9 L2541.5,12.5" fill="none" stroke="#444" stroke-width="1.6"/></svg>
<div style="position:absolute;left:0px;top:1185.2px;width:2553px;height:30px;background:#195094"></div>
<div class="t" style="left:157.7px;top:1188.43px;font-size:9.3px;font-weight:400;color:#eef3f8;letter-spacing:0px;">MARKET</div>
<div class="t" style="left:477.6px;top:1188.43px;font-size:9.3px;font-weight:400;color:#eef3f8;letter-spacing:0px;">ORDER</div>
<div class="t" style="left:838.2px;top:1188.43px;font-size:9.3px;font-weight:400;color:#eef3f8;letter-spacing:0px;">EC</div>
<div class="t" style="left:989px;top:1188.43px;font-size:9.3px;font-weight:400;color:#eef3f8;letter-spacing:0px;">TC</div>
<div class="t" style="left:1126.1px;top:1188.43px;font-size:9.3px;font-weight:400;color:#eef3f8;letter-spacing:0px;">ITC</div>
<div class="t" style="left:1446px;top:1188.43px;font-size:9.3px;font-weight:400;color:#eef3f8;letter-spacing:0px;">VIN NUMBER</div>
<div class="t" style="left:1848px;top:1188.43px;font-size:9.3px;font-weight:400;color:#eef3f8;letter-spacing:0px;">PRODUCTION</div>
<div class="t" style="left:2111.6px;top:1188.43px;font-size:9.3px;font-weight:400;color:#eef3f8;letter-spacing:0px;">SALES TYPE</div>
<div class="t" style="left:2469.5px;top:1188.43px;font-size:9.3px;font-weight:400;color:#eef3f8;letter-spacing:0px;">CAT</div>
<div class="t" style="left:2469.5px;top:1200.33px;font-size:13px;font-weight:700;color:#eef3f8;letter-spacing:-0.3px;">10S</div>
<svg style="left:0;top:1180px" width="40" height="40"><rect x="5.2" y="9.5" width="23.5" height="30" fill="none" stroke="#fff" stroke-width="1.2"/><text x="6.5" y="23" font-size="11.5" font-weight="700" fill="#fff" font-family="Liberation Sans" textLength="21" lengthAdjust="spacingAndGlyphs">LEX</text><text x="6.5" y="34" font-size="11.5" font-weight="700" fill="#fff" font-family="Liberation Sans" textLength="21" lengthAdjust="spacingAndGlyphs">CON</text></svg>
<div class="t" style="left:2202.8px;top:1116.00px;font-size:19px;font-weight:400;color:rgba(110,110,110,0.42);letter-spacing:0.45px;">Activate Windows</div>
<div class="t" style="left:2202.8px;top:1141.71px;font-size:14px;font-weight:400;color:rgba(110,110,110,0.42);letter-spacing:0.38px;">Go to Settings to activate Windows.</div>
<div style="position:absolute;left:2085.1px;top:177.2px;width:212.6px;height:125.5px;background:#fff;border:1px solid #c8c8c8;box-shadow:1px 1px 1px rgba(0,0,0,0.08)"></div>
<div style="position:absolute;left:2086px;top:276.4px;width:207px;height:25.3px;background:#efefef"></div>
<div class="t" style="left:2105.8px;top:181.04px;font-size:18.2px;font-weight:400;color:#000;letter-spacing:0.3px;">Search</div>
<svg style="left:2282px;top:185.8px" width="10" height="12"><path d="M1.7,1.8 L5.7,5 L1.7,8.2 Z" fill="#000"/></svg>
<div class="t" style="left:2105.8px;top:205.04px;font-size:18.2px;font-weight:400;color:#000;letter-spacing:0.3px;">Catalog Information</div>
<svg style="left:2282px;top:209.8px" width="10" height="12"><path d="M1.7,1.8 L5.7,5 L1.7,8.2 Z" fill="#000"/></svg>
<div class="t" style="left:2105.8px;top:229.04px;font-size:18.2px;font-weight:400;color:#000;letter-spacing:0.3px;">Identification Codes</div>
<svg style="left:2282px;top:233.8px" width="10" height="12"><path d="M1.7,1.8 L5.7,5 L1.7,8.2 Z" fill="#000"/></svg>
<div class="t" style="left:2105.8px;top:253.04px;font-size:18.2px;font-weight:400;color:#000;letter-spacing:0.3px;">Service</div>
<svg style="left:2282px;top:257.8px" width="10" height="12"><path d="M1.7,1.8 L5.7,5 L1.7,8.2 Z" fill="#000"/></svg>
<div class="t" style="left:2105.8px;top:277.04px;font-size:18.2px;font-weight:400;color:#000;letter-spacing:0.3px;">Select Language</div>
<svg style="left:2282px;top:281.8px" width="12" height="14"><path d="M1.5,0.8 L8,6 L1.5,11.2 Z" fill="none" stroke="#000" stroke-width="1.3"/></svg>
<div style="position:absolute;left:2292.6px;top:273.9px;width:161.9px;height:553.3px;background:#fff;border:1px solid #c8c8c8"></div>
<div class="t" style="left:2312.5px;top:277.24px;font-size:18.2px;font-weight:400;color:#000;letter-spacing:0.3px;">Deutsch</div>
<div class="t" style="left:2312.5px;top:301.24px;font-size:18.2px;font-weight:400;color:#000;letter-spacing:0.3px;">English</div>
<div class="t" style="left:2312.5px;top:325.24px;font-size:18.2px;font-weight:400;color:#000;letter-spacing:0.3px;">US English</div>
<div class="t" style="left:2312.5px;top:349.24px;font-size:18.2px;font-weight:400;color:#000;letter-spacing:0.3px;">Français</div>
<div class="t" style="left:2312.5px;top:373.24px;font-size:18.2px;font-weight:400;color:#000;letter-spacing:0.3px;">Italiano</div>
<div class="t" style="left:2312.5px;top:397.24px;font-size:18.2px;font-weight:400;color:#000;letter-spacing:0.3px;">Español</div>
<div class="t" style="left:2312.5px;top:421.24px;font-size:18.2px;font-weight:400;color:#000;letter-spacing:0.3px;">Čeština</div>
<div class="t" style="left:2312.5px;top:445.24px;font-size:18.2px;font-weight:400;color:#000;letter-spacing:0.3px;">Dansk</div>
<div class="t" style="left:2312.5px;top:469.24px;font-size:18.2px;font-weight:400;color:#000;letter-spacing:0.3px;">Nederlands</div>
<div class="t" style="left:2312.5px;top:493.24px;font-size:18.2px;font-weight:400;color:#000;letter-spacing:0.3px;">Norsk</div>
<div class="t" style="left:2312.5px;top:517.24px;font-size:18.2px;font-weight:400;color:#000;letter-spacing:0.3px;">Svenska</div>
<div class="t" style="left:2312.5px;top:541.24px;font-size:18.2px;font-weight:400;color:#000;letter-spacing:0.3px;">Polski</div>
<div class="t" style="left:2312.5px;top:565.24px;font-size:18.2px;font-weight:400;color:#000;letter-spacing:0.3px;">Türkçe</div>
<div class="t" style="left:2312.5px;top:589.24px;font-size:18.2px;font-weight:400;color:#000;letter-spacing:0.3px;">Magyar</div>
<div class="t" style="left:2312.5px;top:683.14px;font-size:18.2px;font-weight:400;color:#000;letter-spacing:0.3px;">Русский</div>
<div class="t" style="left:2312.5px;top:707.14px;font-size:18.2px;font-weight:400;color:#000;letter-spacing:0.3px;">Hrvatski</div>
<div class="t" style="left:2312.5px;top:731.14px;font-size:18.2px;font-weight:400;color:#000;letter-spacing:0.3px;">BR Português</div>
<div class="t" style="left:2312.5px;top:755.14px;font-size:18.2px;font-weight:400;color:#000;letter-spacing:0.3px;">Slovenščina</div>
<div class="t" style="left:2312.5px;top:779.14px;font-size:18.2px;font-weight:400;color:#000;letter-spacing:0.3px;">Română</div>
<div class="t" style="left:2312.5px;top:803.14px;font-size:18.2px;font-weight:400;color:#000;letter-spacing:0.3px;">Suomi</div>
<svg style="left:0;top:0" width="2553" height="1215"><g fill="none" stroke="#1a1a1a" stroke-width="1.05"><g transform="translate(2313.8 612.6)"><path d="M2,0 L0.3,3 M1,1.5 L6,1.5 M3,1.5 L4.8,3.5 M9.5,0 L8,3 M8.5,1.5 L15,1.5 M11,1.5 L12.8,3.5 M1,6 L1,17 M3,4.2 L4.3,5.6 M4,6.5 L14.5,6.5 L14.5,16.5 L12.5,16.5 M5,9 L10.5,9 L10.5,14.5 L5,14.5 Z M5,11.75 L10.5,11.75"/></g><g transform="translate(2332.3 612.6)"><path d="M4,0 L0.5,7 M2.5,4.5 L2.5,17 M5,4.5 L16,4.5 M10.5,0 L10.5,17 M10.5,4.5 L5,13 M10.5,4.5 L16,13 M7.5,12.5 L13.5,12.5"/></g><g transform="translate(2352.7 612.6)"><path d="M0.5,4 L13.5,4 L13.5,12 L0.5,12 Z M7,0 L7,17"/></g><g transform="translate(2370.4 612.6)"><path d="M7.5,0 L8.3,2.3 M1,3.5 L15,3.5 M3.5,3.5 Q7,13 15,16.5 M12.5,3.5 Q9,13 1,16.5"/></g><g transform="translate(2313.2 637.3)"><path d="M2,0 L0.5,3 M1,1.5 L8,1.5 M1.5,3.5 L8.5,3.5 L8,8 L1,8 Z M0,5.8 L9.5,5.8 M4.5,3.5 L4.5,8 M10.5,0 L9.5,3 M10,2 L15.5,2 M13,2 Q12,6 9.5,8 M11,3.5 Q13,7 16,8 M7,9 L3,11.5 L12,11.5 M9.5,10 L11,11.5 M7.5,11.5 L7.5,17 M5,14 L1,16.5 M10,14 L14,16.5 M1,13 L14,13"/></g><g transform="translate(2331 637.3)"><path d="M0.5,1 L6,1 L6,5 L0.5,5 Z M0.5,7 L6,7 L6,17 M0.5,7 L0.5,17 M0.5,10 L6,10 M0.5,13 L6,13 M8,1 L15.5,1 M8.5,3 L15,3 L15,7 L8.5,7 Z M11.8,1 L11.8,7 M8.5,5 L15,5 M8,9 L15.5,9 M9,11 L14.5,11 L14.5,13.5 L9,13.5 Z M8,16.5 L15.5,16.5 M10,14 L9.5,16.5 M13.5,14 L14,16.5"/></g><g transform="translate(2350 637.3)"><path d="M0.5,4 L13.5,4 L13.5,12 L0.5,12 Z M7,0 L7,17"/></g><g transform="translate(2367.2 637.3)"><path d="M7.5,0 L8.3,2.3 M1,3.5 L15,3.5 M3.5,3.5 Q7,13 15,16.5 M12.5,3.5 Q9,13 1,16.5"/></g><g transform="translate(2316.1 661.3)"><path d="M0.5,0.5 L10.5,0.5 L10.5,16.5 L0.5,16.5 Z M0.5,8.5 L10.5,8.5"/></g><g transform="translate(2332 661.3)"><path d="M0.5,4.5 L16,4.5 M8.3,0 L8.3,17 M8.3,4.5 L1,13 M8.3,4.5 L15.5,13 M5,12.5 L11.5,12.5"/></g><g transform="translate(2352 661.3)"><path d="M1,1.5 L6,1.5 M0,4.5 L7,4.5 M1,7 L6,7 M1,9.5 L6,9.5 M1,12 L6,12 L6,16.5 L1,16.5 Z M8,1 L15,1 M9.8,1 L9,8.5 M8.5,5 L14.5,5 L14,8.5 M7.5,8.5 L16,8.5 M9,11 L15,11 L15,16.5 L9,16.5 Z"/></g></g></svg>
<svg style="left:2298px;top:326px" width="12" height="16"><path d="M3,9 L5.5,12.5 L10,5" fill="none" stroke="#000" stroke-width="1.7"/></svg></body></html>
